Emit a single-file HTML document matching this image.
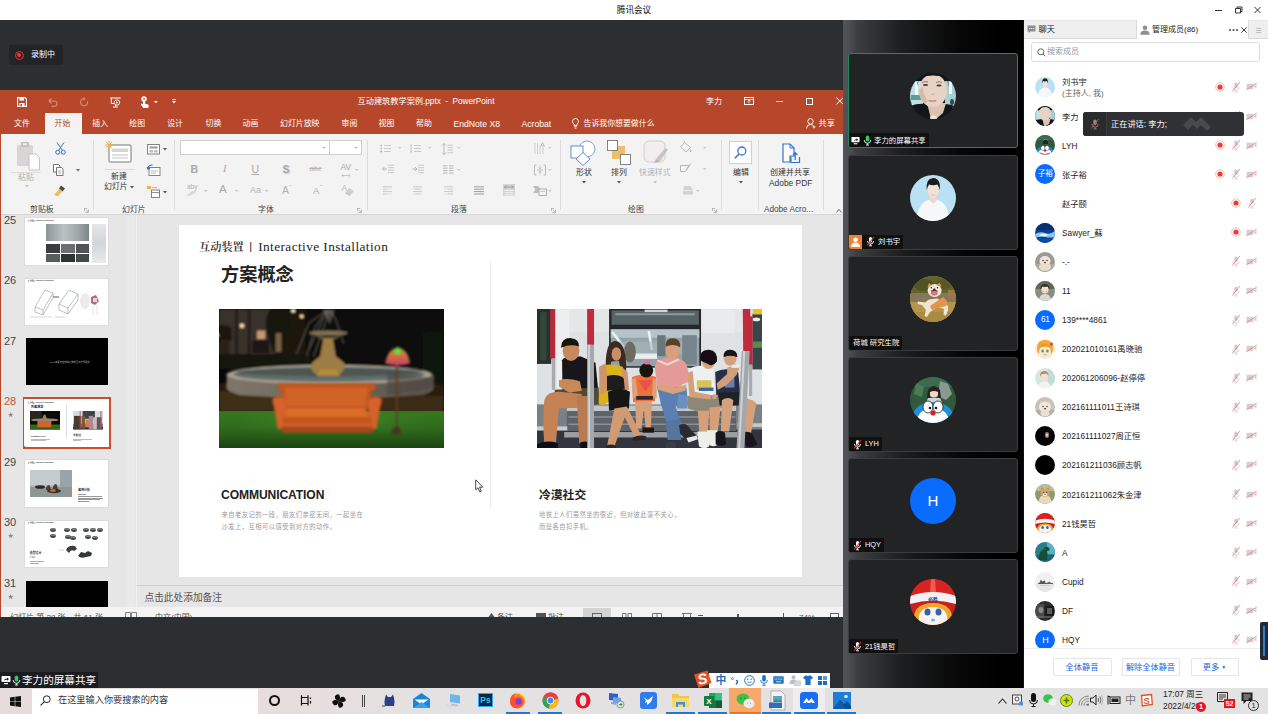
<!DOCTYPE html>
<html lang="zh-CN">
<head>
<meta charset="utf-8">
<title>腾讯会议</title>
<style>
*{box-sizing:border-box;margin:0;padding:0}
html,body{width:1268px;height:714px;overflow:hidden;background:#2c2f32}
body{position:relative;font-family:"Liberation Sans","Noto Sans CJK SC",sans-serif;font-size:9px;color:#222;line-height:1}
.a{position:absolute}
.t{position:absolute;white-space:nowrap;line-height:1}
svg{position:absolute;overflow:visible}
/* ===== top title bar ===== */
#titlebar{left:0;top:0;width:1268px;height:20px;background:#fff}
/* ===== ppt window ===== */
#ppt{left:0;top:90px;width:843px;height:527px;background:#e6e6e6;overflow:hidden}
#ppt .red{left:0;top:0;width:843px;height:44px;background:#b7472a}
#ppt .ribbon{left:0;top:44px;width:843px;height:81px;background:#f3f3f3;border-bottom:1px solid #d6d6d6}
#ppt .tab{color:#fff;font-size:9px;top:30px}
#ppt .gl{font-size:9px;color:#444;top:115px}
#ppt .sep{width:1px;top:50px;height:70px;background:#dcdcdc}
#thumbs{left:0;top:125px;width:136px;height:392px;background:#e6e6e6;overflow:hidden}
#thumbs .n{font-size:11px;color:#444;left:4px}
#thumbs .th{left:23.800px;width:85.200px;height:48.500px;background:#fff;border:1px solid #dcdcdc;overflow:hidden}
#main{left:136px;top:125px;width:707px;height:370px;background:#e6e6e6;border-left:1px solid #f2f2f2}
#slide{left:179px;top:134.500px;width:623px;height:352px;background:#fff;overflow:hidden}
#notes{left:136px;top:495px;width:707px;height:22px;background:#e6e6e6;border-top:1px solid #d0d0d0;border-left:1px solid #f2f2f2}
#status{left:0;top:517px;width:843px;height:10px;background:#f3f3f3;overflow:hidden}
/* ===== video column ===== */
#vcol{left:843px;top:20px;width:180px;height:668px;background:linear-gradient(90deg,#525458 0,#4e5054 5px,#3c3e40 14px,#1c1d1e 60px,#060606 120px,#000 160px)}
.tile{left:5px;width:170px;height:95px;background:#222324;border:1px solid #3b3c3d;border-radius:3px;overflow:hidden}
.tile .av{left:61px;top:19px;width:46px;height:46px;border-radius:50%;overflow:hidden}
.tile .lb{left:0;bottom:0;height:14px;background:#101010;color:#fff;font-size:7.4px;padding:0 3px 0 2px;display:flex;align-items:center;white-space:nowrap}
/* ===== right panel ===== */
#panel{left:1023px;top:20px;width:245px;height:668px;background:#fff;overflow:hidden}
.row{left:0;width:245px;height:29px}
.row .av{left:12.300px;top:4.800px;width:20px;height:20px;border-radius:50%;overflow:hidden}
.row .nm{left:39px;top:11px;font-size:8.300px;color:#222}
/* ===== taskbar ===== */
#taskbar{left:0;top:687.500px;width:1268px;height:26.500px;background:linear-gradient(90deg,#e6dadb 0,#e8dddd 290px,#e3e1e1 400px,#e3e3e3 100%)}
</style>
</head>
<body>
<!-- top title bar -->
<div id="titlebar" class="a">
  <div class="t" style="left:616.800px;top:5.500px;font-size:8.600px;color:#111">腾讯会议</div>
  <svg style="left:1213px;top:5px" width="50" height="10" viewBox="0 0 50 10"><path d="M2 5.5h7M22.5 3.5h5v4.500h-5zM24 3.500v-1.500h5v4.500h-1.500M41.500 2l6 6M47.500 2l-6 6" fill="none" stroke="#333" stroke-width="1"/></svg>
</div>

<!-- recording badge -->
<div class="a" style="left:9px;top:45px;width:54px;height:20px;background:#222427;border-radius:2px">
  <div class="a" style="left:5.500px;top:5.500px;width:9px;height:9px;border-radius:50%;border:1px solid #e33;"></div>
  <div class="a" style="left:7.700px;top:7.700px;width:4.600px;height:4.600px;border-radius:50%;background:#f03a3a"></div>
  <div class="t" style="left:22px;top:6px;font-size:8px;color:#fff">录制中</div>
</div>

<!-- PPT WINDOW -->
<div id="ppt" class="a">
  <div class="red a"></div>
  <div class="ribbon a"></div>
  <div class="a" style="left:0;top:44px;width:1px;height:483px;background:#b7472a;z-index:5"></div>
<svg style="left:16.500px;top:7px" width="10" height="10" viewBox="0 0 10 10"><path d="M.6.600h7.400l1.400 1.400v7.400h-8.800z" fill="none" stroke="#fff" stroke-width="1.100"/><rect x="2.500" y=".6" width="4.500" height="3" fill="#fff"/><rect x="2.500" y="6" width="5" height="3.400" fill="#fff"/><rect x="3.500" y="7" width="1.500" height="2.400" fill="#b7472a"/></svg>
<svg style="left:48px;top:7.500px" width="10" height="9" viewBox="0 0 10 9"><path d="M1 3h5q3 0 3 2.700t-3 2.700h-2.500M3.500.5L1 3l2.500 2.500" fill="none" stroke="#d48c75" stroke-width="1.100"/></svg>
<svg style="left:78.500px;top:7px" width="10" height="10" viewBox="0 0 10 10"><path d="M6.500 1.800a3.600 3.600 0 1 0 2 2.200M5 .3v3.200" fill="none" stroke="#d48c75" stroke-width="1.100"/></svg>
<svg style="left:109.500px;top:6.500px" width="11" height="11" viewBox="0 0 11 11"><path d="M.3 1h10.400M1.300 1v5.500h4M5.500 6.500v3M3 10h5" fill="none" stroke="#fff" stroke-width="1"/><circle cx="7" cy="5.500" r="2.700" fill="#b7472a" stroke="#fff" stroke-width=".9"/><path d="M6.200 4.200l2.200 1.300-2.200 1.300z" fill="#fff"/></svg>
<svg style="left:140px;top:6px" width="9" height="12" viewBox="0 0 9 12"><circle cx="4" cy="3" r="2.700" fill="#fff"/><circle cx="4" cy="3" r="1" fill="#b7472a"/><path d="M3 3.500h2v4l3 1q1 .5.800 1.500l-.5 2h-5l-2.500-3.500q0-1 1-1l1.200.8z" fill="#fff"/></svg>
<svg style="left:154px;top:10.500px" width="3.800" height="2.300" viewBox="0 0 5 3"><path d="M0 0h5l-2.500 3z" fill="#fff"/></svg>
<svg style="left:172.300px;top:9px" width="4" height="5" viewBox="0 0 5 6"><path d="M0 .5h5" stroke="#fff" stroke-width="1"/><path d="M0 2.500h5l-2.500 3z" fill="#fff"/></svg>
<div class="t" style="left:357.500px;top:8px;font-size:8px;color:#fff;word-spacing:0;white-space:pre;font-size:8.200px">互动建筑教学案例.pptx  -  PowerPoint</div>
<div class="t" style="left:706px;top:7.500px;font-size:8px;color:#fff">李力</div>
<svg style="left:744px;top:7px" width="10" height="8" viewBox="0 0 10 8"><rect x=".5" y=".5" width="9" height="7" fill="none" stroke="#fff" stroke-width="1"/><path d="M.5 2.500h9" stroke="#fff" stroke-width=".8"/><path d="M5 6.300v-3M3.700 4.500L5 3.200l1.300 1.300" stroke="#fff" stroke-width=".8" fill="none"/></svg>
<div class="a" style="left:776px;top:10.500px;width:7px;height:1px;background:#f1c4b8"></div>
<div class="a" style="left:806px;top:7.500px;width:7px;height:7px;border:1px solid #fff"></div>
<svg style="left:836px;top:7px" width="7" height="8" viewBox="0 0 7 8"><path d="M.3.500l7 7M7.300.500l-7 7" stroke="#fff" stroke-width="1"/></svg>
<div class="a" style="left:45px;top:23px;width:36.500px;height:21px;background:#f3f3f3"></div>
<div class="t tab" style="left:14px;color:#fff;font-size:7.900px">文件</div>
<div class="t tab" style="left:54.5px;color:#b7472a;font-size:7.900px">开始</div>
<div class="t tab" style="left:92.3px;color:#fff;font-size:7.900px">插入</div>
<div class="t tab" style="left:129.3px;color:#fff;font-size:7.900px">绘图</div>
<div class="t tab" style="left:167.2px;color:#fff;font-size:7.900px">设计</div>
<div class="t tab" style="left:205.5px;color:#fff;font-size:7.900px">切换</div>
<div class="t tab" style="left:242.5px;color:#fff;font-size:7.900px">动画</div>
<div class="t tab" style="left:280px;color:#fff;font-size:7.900px">幻灯片放映</div>
<div class="t tab" style="left:341.5px;color:#fff;font-size:7.900px">审阅</div>
<div class="t tab" style="left:378.5px;color:#fff;font-size:7.900px">视图</div>
<div class="t tab" style="left:416px;color:#fff;font-size:7.900px">帮助</div>
<div class="t tab" style="left:453.5px;color:#fff;font-size:8.650px;top:30.300px">EndNote X8</div>
<div class="t tab" style="left:521.5px;color:#fff;font-size:8.650px;top:30.300px">Acrobat</div>
<svg style="left:572px;top:27.500px" width="7" height="11" viewBox="0 0 7 11"><path d="M3.500.5a3 3 0 0 1 1.500 5.600v1.400h-3v-1.400a3 3 0 0 1 1.500-5.600zM2.300 8.800h2.400M2.600 10.200h1.800" fill="none" stroke="#fff" stroke-width=".9"/></svg>
<div class="t tab" style="left:583.500px;font-size:7.900px">告诉我你想要做什么</div>
<svg style="left:806px;top:28px" width="10" height="11" viewBox="0 0 10 11"><circle cx="4.500" cy="3.300" r="2.700" fill="none" stroke="#fff" stroke-width=".9"/><path d="M.5 10.500q0-4 4-4 2 0 3 1.200" fill="none" stroke="#fff" stroke-width=".9"/><path d="M6.500 9h3M8 7.500v3" stroke="#fff" stroke-width=".8"/></svg>
<div class="t tab" style="left:818.500px;font-size:8.200px">共享</div>
  <div class="a sep" style="left:93px"></div>
<div class="a sep" style="left:174px"></div>
<div class="a sep" style="left:367px"></div>
<div class="a sep" style="left:560px"></div>
<div class="a sep" style="left:721px"></div>
<div class="a sep" style="left:758px"></div>
<div class="a sep" style="left:823px"></div>
<div class="t" style="left:30px;top:116px;font-size:7.9px;color:#444">剪贴板</div>
<div class="t" style="left:122px;top:116px;font-size:7.9px;color:#444">幻灯片</div>
<div class="t" style="left:258px;top:116px;font-size:7.9px;color:#444">字体</div>
<div class="t" style="left:451px;top:116px;font-size:7.9px;color:#444">段落</div>
<div class="t" style="left:628px;top:116px;font-size:7.9px;color:#444">绘图</div>
<div class="t" style="left:764px;top:115.5px;font-size:8.2px;color:#444">Adobe Acro...</div>
<svg style="left:84px;top:118px" width="5" height="5" viewBox="0 0 5 5"><path d="M0 .5h3M.5 0v3M1.500 4.500h3v-3M2 2l2.300 2.300" fill="none" stroke="#aaa" stroke-width=".8"/></svg>
<svg style="left:357px;top:118px" width="5" height="5" viewBox="0 0 5 5"><path d="M0 .5h3M.5 0v3M1.500 4.500h3v-3M2 2l2.300 2.300" fill="none" stroke="#aaa" stroke-width=".8"/></svg>
<svg style="left:551px;top:118px" width="5" height="5" viewBox="0 0 5 5"><path d="M0 .5h3M.5 0v3M1.500 4.500h3v-3M2 2l2.300 2.300" fill="none" stroke="#aaa" stroke-width=".8"/></svg>
<svg style="left:712px;top:118px" width="5" height="5" viewBox="0 0 5 5"><path d="M0 .5h3M.5 0v3M1.500 4.500h3v-3M2 2l2.300 2.300" fill="none" stroke="#aaa" stroke-width=".8"/></svg>
<svg style="left:836px;top:119px" width="6" height="4" viewBox="0 0 6 4"><path d="M.3 3.500l2.700-3 2.700 3" fill="none" stroke="#555" stroke-width=".9"/></svg>
<svg style="left:16px;top:52px" width="24" height="29" viewBox="0 0 24 29"><rect x="1" y="3" width="16" height="21" rx="1" fill="#d9d5d5"/><rect x="5" y="0" width="8" height="5" rx="1" fill="#c3bfbf"/><rect x="7" y="1.200" width="4" height="2" fill="#ececec"/><path d="M13 12h7l3.500 3.500v12.500h-10.500z" fill="#fdfdfd" stroke="#bdbdbd" stroke-width=".9"/></svg>
<div class="a" style="left:11px;top:82px;width:30px;height:1px;background:#ddd"></div>
<div class="t" style="left:18px;top:83.5px;font-size:7.9px;color:#b0b0b0">粘贴</div>
<svg style="left:24.5px;top:94.5px" width="4" height="2.5" viewBox="0 0 4 2.5"><path d="M0 0h4l-2 2.500z" fill="#c4c4c4"/></svg>
<svg style="left:55px;top:52px" width="11" height="13" viewBox="0 0 11 13"><path d="M2 .5l5.500 8M9 .5l-5.500 8" stroke="#3b6fb5" stroke-width="1" fill="none"/><circle cx="2.700" cy="10.200" r="2" fill="none" stroke="#3b6fb5" stroke-width="1"/><circle cx="8.300" cy="10.200" r="2" fill="none" stroke="#3b6fb5" stroke-width="1"/></svg>
<svg style="left:53px;top:74px" width="11" height="12" viewBox="0 0 11 12"><path d="M.5.500h5l1.500 1.500v6h-6.500z" fill="#fff" stroke="#666" stroke-width=".9"/><path d="M3.500 3.500h5l1.500 1.500v6.500h-6.500z" fill="#fff" stroke="#666" stroke-width=".9"/><path d="M5 7h3M5 9h3" stroke="#888" stroke-width=".7"/></svg>
<svg style="left:75.5px;top:78.5px" width="4" height="2.5" viewBox="0 0 4 2.5"><path d="M0 0h4l-2 2.500z" fill="#666"/></svg>
<svg style="left:54px;top:95px" width="12" height="11" viewBox="0 0 12 11"><path d="M7 .5l4 3-2.500 3-3.500-3z" fill="#4a4a4a"/><path d="M5 3.500l3.500 3-4 4-4-.8z" fill="#f0c060"/><path d="M.5 9.700l4 .8" stroke="#d9a441" stroke-width=".8"/></svg>
<svg style="left:105px;top:50px" width="27" height="26" viewBox="0 0 27 26"><rect x="4" y="5" width="22" height="17" rx="1" fill="#fff" stroke="#777" stroke-width="1"/><rect x="7" y="8.500" width="16" height="3.500" fill="#d5d5d5"/><path d="M7 15h16M7 18h16" stroke="#c4c4c4" stroke-width="1"/><path d="M4 1v8M0 5h8M1.200 2.200l5.600 5.600M6.800 2.200l-5.600 5.600" stroke="#f0b23a" stroke-width="1"/></svg>
<div class="a" style="left:105px;top:79px;width:30px;height:1px;background:#ddd"></div>
<div class="t" style="left:111px;top:83px;font-size:7.9px;color:#333">新建</div>
<div class="t" style="left:104px;top:93px;font-size:7.9px;color:#333">幻灯片</div>
<svg style="left:130px;top:95.5px" width="4" height="2.5" viewBox="0 0 4 2.5"><path d="M0 0h4l-2 2.500z" fill="#555"/></svg>
<svg style="left:147px;top:54px" width="14" height="11" viewBox="0 0 14 11"><rect x=".5" y=".5" width="12" height="9.500" fill="#fff" stroke="#777" stroke-width=".9"/><rect x="2.500" y="2.500" width="8" height="2" fill="#999"/><rect x="2.500" y="6" width="3.500" height="2.500" fill="#bbb"/><rect x="7" y="6" width="3.500" height="2.500" fill="#bbb"/></svg>
<svg style="left:162.5px;top:58px" width="4" height="2.5" viewBox="0 0 4 2.5"><path d="M0 0h4l-2 2.500z" fill="#555"/></svg>
<svg style="left:147px;top:74px" width="14" height="12" viewBox="0 0 14 12"><rect x="2" y="3.500" width="11" height="8" fill="#fff" stroke="#777" stroke-width=".9"/><path d="M4 7h7M4 9h5" stroke="#aaa" stroke-width=".8"/><path d="M1 5q0-4 4.500-4M.2 3l.8 2.200 2-1" fill="none" stroke="#2b6cc4" stroke-width="1.100"/></svg>
<svg style="left:147px;top:96px" width="14" height="12" viewBox="0 0 14 12"><rect x="0" y="0" width="4" height="3" fill="#f0b23a"/><path d="M5 1.500h5" stroke="#f0b23a" stroke-width="1"/><rect x="4.500" y="4" width="8" height="7.500" fill="#fff" stroke="#777" stroke-width=".9"/><path d="M4.500 6.500h8" stroke="#777" stroke-width=".8"/></svg>
<svg style="left:162.5px;top:100.5px" width="4" height="2.5" viewBox="0 0 4 2.5"><path d="M0 0h4l-2 2.500z" fill="#555"/></svg>
<div class="a" style="left:180px;top:50px;width:150px;height:15px;background:#fff;border:1px solid #cfcfcf"></div>
<div class="a" style="left:329px;top:50px;width:33px;height:15px;background:#fff;border:1px solid #cfcfcf"></div>
<svg style="left:322px;top:57px" width="3.5" height="2" viewBox="0 0 3.5 2"><path d="M0 0h3.500l-1.750 2z" fill="#bbb"/></svg>
<svg style="left:354px;top:57px" width="3.5" height="2" viewBox="0 0 3.5 2"><path d="M0 0h3.500l-1.750 2z" fill="#bbb"/></svg>
<div class="t" style="left:190.5px;top:73.5px;font-size:10.5px;color:#a9a9a9;font-weight:bold;font-family:'Liberation Sans',sans-serif">B</div>
<div class="t" style="left:223px;top:73.5px;font-size:10.5px;color:#a9a9a9;font-style:italic;font-family:'Liberation Serif',serif">I</div>
<div class="t" style="left:251.5px;top:73.5px;font-size:10.5px;color:#a9a9a9;text-decoration:underline;font-family:'Liberation Sans',sans-serif">U</div>
<div class="t" style="left:282.5px;top:73.5px;font-size:10.5px;color:#a9a9a9;font-weight:bold;text-shadow:1px 1px 1px #ccc;font-family:'Liberation Sans',sans-serif">S</div>
<div class="t" style="left:309.5px;top:75px;font-size:7.5px;color:#b5b5b5;text-decoration:line-through;font-family:'Liberation Sans',sans-serif">abc</div>
<div class="t" style="left:340.5px;top:73px;font-size:8.5px;color:#a9a9a9;font-family:'Liberation Sans',sans-serif">AV</div>
<svg style="left:341px;top:83.5px" width="10" height="3" viewBox="0 0 10 3"><path d="M1 1.500h8M2.200.3L1 1.500l1.200 1.200M7.800.3L9 1.500l-1.200 1.200" fill="none" stroke="#b5b5b5" stroke-width=".7"/></svg>
<svg style="left:355px;top:78.5px" width="3.5" height="2" viewBox="0 0 3.5 2"><path d="M0 0h3.500l-1.750 2z" fill="#c4c4c4"/></svg>
<div class="t" style="left:187px;top:94px;font-size:6.5px;color:#b0b0b0;font-family:'Liberation Sans',sans-serif">aby</div>
<svg style="left:186px;top:100.5px" width="12" height="5" viewBox="0 0 12 5"><path d="M6 0l5 .5-6 4-5 .5z" fill="#d9d9d9"/></svg>
<svg style="left:203.5px;top:100px" width="3.5" height="2" viewBox="0 0 3.5 2"><path d="M0 0h3.500l-1.750 2z" fill="#c4c4c4"/></svg>
<div class="t" style="left:219px;top:94px;font-size:11.5px;color:#a9a9a9;font-family:'Liberation Sans',sans-serif">A</div>
<svg style="left:234.5px;top:100px" width="3.5" height="2" viewBox="0 0 3.5 2"><path d="M0 0h3.500l-1.750 2z" fill="#c4c4c4"/></svg>
<div class="t" style="left:250px;top:95.5px;font-size:9px;color:#b5b5b5;font-family:'Liberation Sans',sans-serif">Aa</div>
<svg style="left:264.5px;top:100px" width="3.5" height="2" viewBox="0 0 3.5 2"><path d="M0 0h3.500l-1.750 2z" fill="#c4c4c4"/></svg>
<div class="t" style="left:282px;top:95px;font-size:10.5px;color:#b0b0b0;font-family:'Liberation Sans',sans-serif">A</div>
<div class="t" style="left:289.5px;top:93.5px;font-size:6px;color:#b0b0b0;font-family:'Liberation Sans',sans-serif">ˆ</div>
<div class="t" style="left:313px;top:96px;font-size:9.5px;color:#b0b0b0;font-family:'Liberation Sans',sans-serif">A</div>
<div class="t" style="left:320px;top:93.5px;font-size:6px;color:#b0b0b0;font-family:'Liberation Sans',sans-serif">ˇ</div>
<div class="t" style="left:341.5px;top:93.5px;font-size:8.5px;color:#b5b5b5;font-family:'Liberation Sans',sans-serif">A</div>
<svg style="left:345px;top:98px" width="10" height="8" viewBox="0 0 10 8"><path d="M4 0l5 3-4 4.500-4.500-2.500z" fill="#cfcfcf"/><path d="M.5 5l4.500 2.500" stroke="#bdbdbd" stroke-width="1"/></svg>
<svg style="left:380px;top:53.5px" width="11" height="9" viewBox="0 0 11 9"><path d="M4 1.5h7" stroke="#c9c9c9" stroke-width="1"/><path d="M4 4.5h7" stroke="#c9c9c9" stroke-width="1"/><path d="M4 7.5h7" stroke="#c9c9c9" stroke-width="1"/><circle cx="1.200" cy="1.5" r=".9" fill="#b5b5b5"/><circle cx="1.200" cy="4.5" r=".9" fill="#b5b5b5"/><circle cx="1.200" cy="7.5" r=".9" fill="#b5b5b5"/></svg>
<svg style="left:397.5px;top:57px" width="3.5" height="2" viewBox="0 0 3.5 2"><path d="M0 0h3.500l-1.750 2z" fill="#c9c9c9"/></svg>
<svg style="left:410px;top:53.5px" width="11" height="9" viewBox="0 0 11 9"><path d="M4 1.5h7" stroke="#c9c9c9" stroke-width="1"/><path d="M4 4.5h7" stroke="#c9c9c9" stroke-width="1"/><path d="M4 7.5h7" stroke="#c9c9c9" stroke-width="1"/><rect x="0.500" y="0.5" width="1.200" height="2" fill="#b5b5b5"/><rect x="0.500" y="3.5" width="1.200" height="2" fill="#b5b5b5"/><rect x="0.500" y="6.5" width="1.200" height="2" fill="#b5b5b5"/></svg>
<svg style="left:428px;top:57px" width="3.5" height="2" viewBox="0 0 3.5 2"><path d="M0 0h3.500l-1.750 2z" fill="#c9c9c9"/></svg>
<svg style="left:442px;top:52.5px" width="11" height="12" viewBox="0 0 11 12"><path d="M2 .5v11M.3 2.500L2 .5l1.700 2M.3 9.500L2 11.500l1.700-2" fill="none" stroke="#b5b5b5" stroke-width=".9"/><path d="M5.5 2.2h5.5" stroke="#c9c9c9" stroke-width="1"/><path d="M5.5 4.7h5.5" stroke="#c9c9c9" stroke-width="1"/><path d="M5.5 7.2h5.5" stroke="#c9c9c9" stroke-width="1"/><path d="M5.5 9.7h5.5" stroke="#c9c9c9" stroke-width="1"/></svg>
<svg style="left:457px;top:57px" width="3.5" height="2" viewBox="0 0 3.5 2"><path d="M0 0h3.500l-1.750 2z" fill="#c9c9c9"/></svg>
<svg style="left:382px;top:74px" width="12" height="10" viewBox="0 0 12 10"><path d="M6 1.2h6" stroke="#c9c9c9" stroke-width="1"/><path d="M6 3.7h6" stroke="#c9c9c9" stroke-width="1"/><path d="M6 6.2h6" stroke="#c9c9c9" stroke-width="1"/><path d="M6 8.7h6" stroke="#c9c9c9" stroke-width="1"/><path d="M5 5h-4.500M2.500 3L.5 5l2 2" fill="none" stroke="#b5b5b5" stroke-width="1"/></svg>
<svg style="left:412px;top:74px" width="12" height="10" viewBox="0 0 12 10"><path d="M6 1.2h6" stroke="#c9c9c9" stroke-width="1"/><path d="M6 3.7h6" stroke="#c9c9c9" stroke-width="1"/><path d="M6 6.2h6" stroke="#c9c9c9" stroke-width="1"/><path d="M6 8.7h6" stroke="#c9c9c9" stroke-width="1"/><path d="M.5 5h4.500M3 3l2 2-2 2" fill="none" stroke="#b5b5b5" stroke-width="1"/></svg>
<svg style="left:443px;top:75px" width="11" height="9" viewBox="0 0 11 9"><path d="M0 0.8h4.5" stroke="#b5b5b5" stroke-width="1"/><path d="M0 3.2h4.5" stroke="#b5b5b5" stroke-width="1"/><path d="M0 5.6h4.5" stroke="#b5b5b5" stroke-width="1"/><path d="M0 7.999999999999999h4.5" stroke="#b5b5b5" stroke-width="1"/><path d="M6 0.8h4.5" stroke="#b5b5b5" stroke-width="1"/><path d="M6 3.2h4.5" stroke="#b5b5b5" stroke-width="1"/><path d="M6 5.6h4.5" stroke="#b5b5b5" stroke-width="1"/><path d="M6 7.999999999999999h4.5" stroke="#b5b5b5" stroke-width="1"/></svg>
<svg style="left:457px;top:78.5px" width="3.5" height="2" viewBox="0 0 3.5 2"><path d="M0 0h3.500l-1.750 2z" fill="#c9c9c9"/></svg>
<svg style="left:383px;top:96px" width="10" height="9" viewBox="0 0 10 9"><path d="M0 0.8h9" stroke="#c9c9c9" stroke-width="1"/><path d="M0 3.2h9" stroke="#c9c9c9" stroke-width="1"/><path d="M0 5.6h9" stroke="#c9c9c9" stroke-width="1"/><path d="M0 7.999999999999999h9" stroke="#c9c9c9" stroke-width="1"/><path d="M4.5 3.2h5" stroke="#f3f3f3" stroke-width="1.2"/><path d="M4.5 8.0h5" stroke="#f3f3f3" stroke-width="1.2"/></svg>
<svg style="left:413px;top:96px" width="10" height="9" viewBox="0 0 10 9"><path d="M0 0.8h9" stroke="#c9c9c9" stroke-width="1"/><path d="M0 3.2h9" stroke="#c9c9c9" stroke-width="1"/><path d="M0 5.6h9" stroke="#c9c9c9" stroke-width="1"/><path d="M0 7.999999999999999h9" stroke="#c9c9c9" stroke-width="1"/><path d="M0 3.2h2.2" stroke="#f3f3f3" stroke-width="1.2"/><path d="M0 8.0h2.2" stroke="#f3f3f3" stroke-width="1.2"/><path d="M6.8 3.2h2.2" stroke="#f3f3f3" stroke-width="1.2"/><path d="M6.8 8.0h2.2" stroke="#f3f3f3" stroke-width="1.2"/></svg>
<svg style="left:444px;top:96px" width="10" height="9" viewBox="0 0 10 9"><path d="M0 0.8h9" stroke="#c9c9c9" stroke-width="1"/><path d="M0 3.2h9" stroke="#c9c9c9" stroke-width="1"/><path d="M0 5.6h9" stroke="#c9c9c9" stroke-width="1"/><path d="M0 7.999999999999999h9" stroke="#c9c9c9" stroke-width="1"/><path d="M0 3.2h4" stroke="#f3f3f3" stroke-width="1.2"/><path d="M0 8.0h4" stroke="#f3f3f3" stroke-width="1.2"/></svg>
<svg style="left:474px;top:96px" width="10" height="9" viewBox="0 0 10 9"><path d="M0 0.8h10" stroke="#9a9a9a" stroke-width="1"/><path d="M0 3.2h10" stroke="#9a9a9a" stroke-width="1"/><path d="M0 5.6h10" stroke="#9a9a9a" stroke-width="1"/><path d="M0 7.999999999999999h10" stroke="#9a9a9a" stroke-width="1"/></svg>
<svg style="left:503px;top:94px" width="12" height="12" viewBox="0 0 12 12"><rect x="0" y="0" width="12" height="12" fill="#d4d4d4"/><path d="M1.500 3h9M3 1.500L1.500 3 3 4.500M9 1.500l1.500 1.500L9 4.500" fill="none" stroke="#8a8a8a" stroke-width=".8"/><path d="M1.5 6.5h9" stroke="#f6f6f6" stroke-width="0.9"/><path d="M1.5 8.7h9" stroke="#f6f6f6" stroke-width="0.9"/><path d="M1.5 10.9h9" stroke="#f6f6f6" stroke-width="0.9"/></svg>
<svg style="left:534px;top:52px" width="12" height="13" viewBox="0 0 12 13"><path d="M1 1v11M3.500 1v11M6 4v8M9 4v8" stroke="#c9c9c9" stroke-width=".9"/><path d="M6.500 4.500l2-4 2 4M7.200 3.200h2.600" fill="none" stroke="#b5b5b5" stroke-width=".9"/></svg>
<svg style="left:548px;top:57px" width="3.5" height="2" viewBox="0 0 3.5 2"><path d="M0 0h3.500l-1.750 2z" fill="#c9c9c9"/></svg>
<svg style="left:534px;top:74px" width="12" height="12" viewBox="0 0 12 12"><path d="M2.500 1h-2v10h2M9.500 1h2v10h-2" fill="none" stroke="#b5b5b5" stroke-width=".9"/><path d="M3 6h6" stroke="#b5b5b5" stroke-width=".9"/><path d="M6 1.500v3M4.800 3.500L6 4.800l1.200-1.300M6 10.500v-3M4.800 8.500L6 7.200l1.200 1.300" fill="none" stroke="#b5b5b5" stroke-width=".8"/></svg>
<svg style="left:548px;top:78.5px" width="3.5" height="2" viewBox="0 0 3.5 2"><path d="M0 0h3.500l-1.750 2z" fill="#c9c9c9"/></svg>
<svg style="left:533px;top:95px" width="14" height="11" viewBox="0 0 14 11"><path d="M0 1h5l3 3.500-3 3.500h-5l2.500-3.500z" fill="#bdbdbd"/><rect x="6" y="4" width="7.500" height="6.500" fill="#f3f3f3" stroke="#a9a9a9" stroke-width=".9"/><path d="M7.500 6.500h4.500" stroke="#bbb" stroke-width=".8"/></svg>
<svg style="left:548px;top:100px" width="3.5" height="2" viewBox="0 0 3.5 2"><path d="M0 0h3.500l-1.750 2z" fill="#c9c9c9"/></svg>
<svg style="left:570px;top:50px" width="27" height="26" viewBox="0 0 27 26"><circle cx="17" cy="9" r="8" fill="#fff" stroke="#7fa6d6" stroke-width="1"/><rect x="1" y="6" width="12" height="12" fill="#fff" stroke="#5b8fd0" stroke-width="1"/><path d="M13 12.500l7 6.500-7 6.500-7-6.500z" fill="#fff" stroke="#5b8fd0" stroke-width="1"/></svg>
<div class="t" style="left:576px;top:79px;font-size:7.9px;color:#333">形状</div>
<svg style="left:582px;top:90.5px" width="4" height="2.5" viewBox="0 0 4 2.5"><path d="M0 0h4l-2 2.500z" fill="#555"/></svg>
<svg style="left:607px;top:50px" width="25" height="26" viewBox="0 0 25 26"><rect x="5" y="6" width="13" height="13" fill="#eac06c"/><rect x=".5" y=".5" width="10" height="10" fill="#fff" stroke="#777" stroke-width=".9"/><rect x="13.500" y="14.500" width="10" height="10" fill="#fff" stroke="#777" stroke-width=".9"/></svg>
<div class="t" style="left:611px;top:79px;font-size:7.9px;color:#333">排列</div>
<svg style="left:617px;top:90.5px" width="4" height="2.5" viewBox="0 0 4 2.5"><path d="M0 0h4l-2 2.500z" fill="#555"/></svg>
<svg style="left:643px;top:50px" width="26" height="26" viewBox="0 0 26 26"><rect x="1" y="1" width="21" height="21" rx="5" fill="#f0eeee" stroke="#cfcfcf" stroke-width="1"/><path d="M13 19l9-11 3 1.500-8 12z" fill="#c9c5c5"/><path d="M11 23l2-4 4 2.500z" fill="#b8b4b4"/></svg>
<div class="t" style="left:639px;top:79px;font-size:7.9px;color:#b5b5b5">快速样式</div>
<svg style="left:652.5px;top:90.5px" width="4" height="2.5" viewBox="0 0 4 2.5"><path d="M0 0h4l-2 2.500z" fill="#c4c4c4"/></svg>
<svg style="left:680px;top:51px" width="12" height="12" viewBox="0 0 12 12"><path d="M4.500 1.500l6 5-4.500 4.500-5.500-5z" fill="none" stroke="#b0b0b0" stroke-width=".9"/><path d="M4.500 1.500v-1.500M10.500 8.500q1 1.500 0 2.500-1-1 0-2.500z" stroke="#b0b0b0" stroke-width=".8" fill="none"/></svg>
<svg style="left:703px;top:56.5px" width="3.5" height="2" viewBox="0 0 3.5 2"><path d="M0 0h3.500l-1.750 2z" fill="#c9c9c9"/></svg>
<svg style="left:680px;top:73px" width="12" height="11" viewBox="0 0 12 11"><path d="M.5 2.500h8.500l-3.500 6h-5z" fill="none" stroke="#b0b0b0" stroke-width=".9"/><path d="M11 .5l-5 6.500" stroke="#b0b0b0" stroke-width="1"/></svg>
<svg style="left:703px;top:78px" width="3.5" height="2" viewBox="0 0 3.5 2"><path d="M0 0h3.500l-1.750 2z" fill="#c9c9c9"/></svg>
<svg style="left:682px;top:95px" width="12" height="11" viewBox="0 0 12 11"><path d="M2.500 1h6l2.500 4v4.500h-10v-4.500z" fill="#d3d3d3"/><path d="M1 5.500h10" stroke="#f3f3f3" stroke-width=".8"/></svg>
<svg style="left:696px;top:100px" width="3.5" height="2" viewBox="0 0 3.5 2"><path d="M0 0h3.500l-1.750 2z" fill="#c9c9c9"/></svg>
<div class="a" style="left:729px;top:51px;width:23px;height:23px;background:#fff;border:1px solid #d0d0d0"></div>
<svg style="left:734px;top:56px" width="13" height="13" viewBox="0 0 13 13"><circle cx="7.800" cy="5" r="4" fill="none" stroke="#3d78c4" stroke-width="1.300"/><path d="M5 8L.8 12.200" stroke="#3d78c4" stroke-width="1.600"/></svg>
<div class="t" style="left:733px;top:79px;font-size:7.9px;color:#333">编辑</div>
<svg style="left:739px;top:90.5px" width="4" height="2.5" viewBox="0 0 4 2.5"><path d="M0 0h4l-2 2.500z" fill="#555"/></svg>
<svg style="left:782px;top:53px" width="19" height="21" viewBox="0 0 19 21"><path d="M1 1h7l4 4v8h-4v6h-7z" fill="#fff" stroke="#2f74d0" stroke-width="1.200"/><path d="M8 1v4h4" fill="none" stroke="#2f74d0" stroke-width="1"/><path d="M9 14v5.500h8.500v-5.500M13.200 17v-7M11 12l2.200-2.300 2.200 2.300" fill="none" stroke="#2f74d0" stroke-width="1.200"/></svg>
<div class="t" style="left:770px;top:79px;font-size:8px;color:#333">创建并共享</div>
<div class="t" style="left:769px;top:89px;font-size:8.4px;color:#333">Adobe PDF</div>
  <div id="thumbs" class="a">
  <div class="t n" style="top:-0.5px;color:#444">25</div>
<div class="t n" style="top:60.0px;color:#444">26</div>
<div class="t n" style="top:120.80000000000001px;color:#444">27</div>
<div class="t n" style="top:181.10000000000002px;color:#c8502c">28</div>
<svg style="left:8px;top:197.10000000000002px" width="5.500" height="5.500" viewBox="0 0 7 7"><path d="M3.500 0l.9 2.500h2.600l-2.100 1.600.8 2.600-2.200-1.600-2.200 1.600.8-2.600-2.100-1.600h2.600z" fill="#888"/></svg>
<div class="t n" style="top:241.7px;color:#444">29</div>
<div class="t n" style="top:302.29999999999995px;color:#444">30</div>
<svg style="left:8px;top:318.29999999999995px" width="5.500" height="5.500" viewBox="0 0 7 7"><path d="M3.500 0l.9 2.500h2.600l-2.100 1.600.8 2.600-2.200-1.600-2.200 1.600.8-2.600-2.100-1.600h2.600z" fill="#888"/></svg>
<div class="t n" style="top:363.1px;color:#444">31</div>
<svg style="left:8px;top:379.1px" width="5.500" height="5.500" viewBox="0 0 7 7"><path d="M3.500 0l.9 2.500h2.600l-2.100 1.600.8 2.600-2.200-1.600-2.200 1.600.8-2.600-2.100-1.600h2.600z" fill="#888"/></svg>
<div class="th a" style="top:2px;"><div class="t" style="left:3px;top:1.500px;font-size:1.700px;color:#333;font-weight:bold">互动装置 | Interactive Installation</div><div class="a" style="left:21.500px;top:5.500px;width:43px;height:17.500px;background:linear-gradient(90deg,#8b9496,#b9c1c3 40%,#a3abad 70%,#7b8486)"></div><div class="a" style="left:21.5px;top:26px;width:13.500px;height:8.6px;background:#3a3d3f"></div><div class="a" style="left:36.3px;top:26px;width:13.500px;height:8.6px;background:#6b6f70"></div><div class="a" style="left:51.1px;top:26px;width:13.500px;height:8.6px;background:#505455"></div><div class="a" style="left:21.5px;top:35.8px;width:13.500px;height:8.6px;background:#585c5d"></div><div class="a" style="left:36.3px;top:35.8px;width:13.500px;height:8.6px;background:#2f3233"></div><div class="a" style="left:51.1px;top:35.8px;width:13.500px;height:8.6px;background:#45494a"></div><div class="a" style="left:67px;top:5.500px;width:14px;height:39px;background:linear-gradient(180deg,#e4e6e7,#d3d6d8 50%,#e8eaeb)"></div></div>
<div class="th a" style="top:62.5px;"><div class="t" style="left:3px;top:1.500px;font-size:1.700px;color:#333;font-weight:bold">互动装置 | Interactive Installation</div><svg style="left:0;top:0" width="83" height="47" viewBox="0 0 83 47"><g fill="none" stroke="#8d99a3" stroke-width=".6"><path d="M10 28l10-17 8 3-10 17zM10 28v5l8 3v-5M28 14v5l-10 17"/><path d="M34 25l10-14 9 4-10 14zM34 25v6l9 4v-6M53 15v6l-10 14"/><path d="M5 38h22M30 38h10" stroke="#e0b0b0"/></g><path d="M28 18h6" stroke="#777" stroke-width="1.200"/><ellipse cx="60" cy="22" rx="5" ry="8" fill="#ececec"/><path d="M66 18l5-2 3 6-4 4-4-2z" fill="#b56a78"/><rect x="68" y="19" width="4" height="4" fill="#d9d9e2"/><path d="M68 26v10M72 26v10" stroke="#e6b8b8" stroke-width=".5"/></svg></div>
<div class="th a" style="top:123.30000000000001px;background:#000;border-color:#000;left:26px;width:82px;height:46.500px"><div class="t" style="left:23px;top:22px;font-size:2.200px;color:#bdbdbd;letter-spacing:.1px">2016年夏天在布鲁克林的互动装置展览</div></div>
<div class="a" style="left:22.500px;top:182px;width:88.500px;height:52px;border:2px solid #c8502c;background:#fff"></div>
<div class="th a" style="top:183.60000000000002px;border-color:#fff;top:184px;height:47px"><div class="t" style="left:3px;top:1.500px;font-size:1.700px;color:#333;font-weight:bold">互动装置 | Interactive Installation</div><div class="t" style="left:6px;top:6px;font-size:3.200px;font-weight:bold;color:#222">方案概念</div><svg style="left:5.500px;top:11.300px" width="30" height="18.500" viewBox="25 25 1077 665" preserveAspectRatio="none"><rect x="25" y="25" width="1077" height="665" fill="#0d0b08"/><rect x="25" y="25" width="420" height="270" fill="#2b251d"/><ellipse cx="552" cy="345" rx="492" ry="60" fill="#8d877b"/><path d="M520 160h55l60 140h-170z" fill="#a78648"/><rect x="25" y="512" width="1077" height="178" fill="#2f6a1c"/><path d="M290 385h500v225h-500z" fill="#d4622a"/></svg><svg style="left:48px;top:11.300px" width="30" height="18.500" viewBox="25 25 1077 665" preserveAspectRatio="none"><rect x="25" y="25" width="1077" height="665" fill="#d9dcde"/><rect x="370" y="25" width="440" height="280" fill="#3a444a"/><rect x="25" y="480" width="1077" height="125" fill="#7a8085"/><rect x="25" y="600" width="1077" height="90" fill="#32363e"/><path d="M60 200h250v480h-250z" fill="#4a3a30"/><path d="M330 200h130v450h-130z" fill="#7a5a30"/><path d="M480 330h115v280h-115z" fill="#e0764a"/><path d="M590 200h160v470h-160z" fill="#a98a9a"/><path d="M750 250h150v430h-150z" fill="#cdbfae"/><path d="M880 250h170v430h-170z" fill="#5a5560"/><rect x="265" y="25" width="33" height="665" fill="#b0586a"/><rect x="1010" y="25" width="36" height="665" fill="#b0586a"/></svg><div class="a" style="left:41.500px;top:5px;width:.5px;height:33px;background:#ddd"></div><div class="t" style="left:6px;top:35.500px;font-size:1.700px;font-weight:bold;color:#222">COMMUNICATION</div><div class="a" style="left:6px;top:38.500px;width:19px;height:.5px;background:#bbb"></div><div class="a" style="left:6px;top:40px;width:15px;height:.5px;background:#bbb"></div><div class="t" style="left:48.500px;top:35.300px;font-size:1.900px;font-weight:bold;color:#222">冷漠社交</div><div class="a" style="left:48.500px;top:38.500px;width:19px;height:.5px;background:#bbb"></div><div class="a" style="left:48.500px;top:40px;width:8px;height:.5px;background:#bbb"></div></div>
<div class="th a" style="top:244.2px;"><div class="t" style="left:3px;top:1.500px;font-size:1.700px;color:#333;font-weight:bold">互动装置 | Interactive Installation</div><svg style="left:5px;top:9.500px" width="42" height="27" viewBox="0 0 42 27"><rect width="42" height="27" fill="#aeb6ba"/><rect x="0" y="0" width="42" height="15" fill="#c3cbcf"/><rect x="30" y="0" width="12" height="17" fill="#9aa3a8"/><rect y="17" width="42" height="10" fill="#8f9796"/><ellipse cx="10" cy="17" rx="5" ry="1.800" fill="#2a2a2a"/><path d="M16 18q2-5 4-2l1 4h-5zM23 17q2-5 4-2l1 5h-5z" fill="#4a3f38"/><ellipse cx="24" cy="21" rx="7" ry="2.200" fill="#3a2f2a"/><ellipse cx="23" cy="20.500" rx="3" ry="1.200" fill="#c9752a"/></svg><div class="t" style="left:53.500px;top:28.500px;font-size:2.900px;font-weight:bold;color:#222">案例分析</div><div class="a" style="left:53.500px;top:34.0px;width:8px;height:.6px;background:#999"></div><div class="a" style="left:53.500px;top:35.7px;width:24px;height:.6px;background:#999"></div><div class="a" style="left:53.500px;top:37.4px;width:25px;height:.6px;background:#999"></div><div class="a" style="left:53.500px;top:39.1px;width:22px;height:.6px;background:#999"></div><div class="a" style="left:53.500px;top:40.8px;width:11px;height:.6px;background:#999"></div></div>
<div class="th a" style="top:304.79999999999995px;"><div class="t" style="left:3px;top:1.500px;font-size:1.700px;color:#333;font-weight:bold">互动装置 | Interactive Installation</div><svg style="left:0;top:0" width="83" height="47" viewBox="0 0 83 47"><ellipse cx="28" cy="9" rx="2.900" ry="1.900" fill="#3f4346"/><ellipse cx="28" cy="8.2" rx="2.300" ry=".9" fill="#7a7f82"/><ellipse cx="42" cy="9" rx="2.900" ry="1.900" fill="#3f4346"/><ellipse cx="42" cy="8.2" rx="2.300" ry=".9" fill="#7a7f82"/><ellipse cx="49" cy="9" rx="2.900" ry="1.900" fill="#3f4346"/><ellipse cx="49" cy="8.2" rx="2.300" ry=".9" fill="#7a7f82"/><ellipse cx="61" cy="9" rx="2.900" ry="1.900" fill="#3f4346"/><ellipse cx="61" cy="8.2" rx="2.300" ry=".9" fill="#7a7f82"/><ellipse cx="68" cy="9" rx="2.900" ry="1.900" fill="#3f4346"/><ellipse cx="68" cy="8.2" rx="2.300" ry=".9" fill="#7a7f82"/><ellipse cx="75" cy="9" rx="2.900" ry="1.900" fill="#3f4346"/><ellipse cx="75" cy="8.2" rx="2.300" ry=".9" fill="#7a7f82"/><ellipse cx="28" cy="15" rx="2.900" ry="1.900" fill="#3f4346"/><ellipse cx="28" cy="14.2" rx="2.300" ry=".9" fill="#7a7f82"/><ellipse cx="43" cy="16" rx="2.900" ry="1.900" fill="#3f4346"/><ellipse cx="43" cy="15.2" rx="2.300" ry=".9" fill="#7a7f82"/><ellipse cx="48" cy="17" rx="2.900" ry="1.900" fill="#3f4346"/><ellipse cx="48" cy="16.2" rx="2.300" ry=".9" fill="#7a7f82"/><ellipse cx="63" cy="16" rx="2.900" ry="1.900" fill="#3f4346"/><ellipse cx="63" cy="15.2" rx="2.300" ry=".9" fill="#7a7f82"/><ellipse cx="70" cy="17" rx="2.900" ry="1.900" fill="#3f4346"/><ellipse cx="70" cy="16.2" rx="2.300" ry=".9" fill="#7a7f82"/><path d="M41 29q2-5 9-4l2 3-3 2q-3-2-5 2z" fill="#3a3e41"/><path d="M53 35q3 3 8 1l5-1 1-3-4-2-3 2-4-1z" fill="#33373a"/><path d="M34 29h5" stroke="#999" stroke-width=".5"/></svg><div class="t" style="left:5px;top:31.500px;font-size:2.900px;font-weight:bold;color:#222">造型设计</div><div class="t" style="left:5px;top:36.500px;font-size:1.900px;color:#555">模块化</div><div class="a" style="left:5px;top:40.5px;width:14px;height:.5px;background:#aaa"></div><div class="a" style="left:5px;top:42.1px;width:9px;height:.5px;background:#aaa"></div></div>
<div class="th a" style="top:365.6px;background:#000;border-color:#000;left:26px;width:82px;height:46.500px"></div>
<div class="a" style="left:126px;top:0;width:9px;height:392px;background:#e9e9e9"></div>
  </div>
  <div id="main" class="a"></div>
  <div id="slide" class="a">
  <div class="t" style="left:20px;top:15.5px;color:#222"><span style="font-family:'Liberation Serif','Noto Serif CJK SC',serif;font-weight:600;font-size:11.200px">互动装置</span><span style="margin:0 6px 0 5.500px;font-size:11px;position:relative;top:-1px">|</span><span style="font-family:'Liberation Serif',serif;font-size:13.300px;letter-spacing:.42px">Interactive Installation</span></div>
<div class="t" style="left:42px;top:41.80000000000001px;font-size:18.200px;font-weight:bold;color:#222">方案概念</div>
<svg style="left:40px;top:84.300px;overflow:hidden" width="225" height="139.400" viewBox="25 25 1077 665" preserveAspectRatio="none"><defs><filter id="fb" x="-5%" y="-5%" width="110%" height="110%"><feGaussianBlur stdDeviation="4.500"/></filter>
<linearGradient id="gr" x1="0" y1="0" x2="0" y2="1"><stop offset="0" stop-color="#37781f"/><stop offset=".45" stop-color="#2f6a1c"/><stop offset="1" stop-color="#1c4412"/></linearGradient>
<radialGradient id="grl" cx=".5" cy=".2" r=".6"><stop offset="0" stop-color="#4a9a2a" stop-opacity=".7"/><stop offset="1" stop-color="#2f6a1c" stop-opacity="0"/></radialGradient>
<linearGradient id="bas" x1="0" y1="0" x2="1" y2="0"><stop offset="0" stop-color="#7d766a"/><stop offset=".5" stop-color="#6d665b"/><stop offset="1" stop-color="#59534a"/></linearGradient>
<linearGradient id="lamp" x1="0" y1="0" x2="0" y2="1"><stop offset="0" stop-color="#3fae3a"/><stop offset=".35" stop-color="#c9803a"/><stop offset="1" stop-color="#cf4a5a"/></linearGradient></defs>
<rect x="25" y="25" width="1077" height="665" fill="#0a0806"/>
<g filter="url(#fb)">
<rect x="25" y="25" width="420" height="270" fill="#1a150f"/>
<rect x="25" y="25" width="270" height="225" fill="#39322a"/>
<rect x="440" y="25" width="662" height="280" fill="#0b0907"/>
<path d="M255 140q-15-70 15-115h80q30 55 5 115l-30 90h-40z" fill="#12150d"/>
<rect x="104" y="25" width="9" height="280" fill="#15120e"/><rect x="164" y="25" width="11" height="280" fill="#1a1611"/>
<rect x="207" y="128" width="40" height="40" fill="#c99870"/><rect x="296" y="140" width="28" height="90" fill="#7a5f44"/>
<circle cx="135" cy="105" r="11" fill="#ffd9a0"/><circle cx="380" cy="33" r="10" fill="#ffe6bd"/><circle cx="421" cy="60" r="9" fill="#ffdcae"/><circle cx="28" cy="150" r="8" fill="#e9b57c"/>
<path d="M25 105q30-10 60 10v60h-60z" fill="#1a1610"/><rect x="30" y="170" width="45" height="110" fill="#2a2018"/>
<path d="M185 175h80v60h-80z" fill="#1b1712"/>
<rect x="25" y="240" width="440" height="70" fill="#17120c"/>
<path d="M25 380h1077v140h-1077z" fill="#2a1f11"/>
<path d="M25 420h300v95h-300z" fill="#3d2e15"/><path d="M800 440h302v80h-302z" fill="#3a2c16"/>
<path d="M540 30l-25 60-70 150M545 30l-60 80-40 140M548 30l-10 50-60 170M552 30l30 40 40 120M546 30l-90 60-60 150" stroke="#8a8078" stroke-width="7" fill="none" opacity=".45"/>
<path d="M520 28h60l-25 70z" fill="#8b8580" opacity=".5"/>
<path d="M1000 140q60-20 102 0v240h-102z" fill="#0d120b"/>
<!-- basin -->
<path d="M62 340v60q0 18 60 35l200 12h480l200-12q50-14 50-35v-60z" fill="url(#bas)"/>
<ellipse cx="552" cy="338" rx="492" ry="47" fill="#a59e90"/>
<ellipse cx="552" cy="336" rx="458" ry="35" fill="#626d69"/><ellipse cx="552" cy="326" rx="440" ry="20" fill="#4c5654"/>
<path d="M830 330q150 10 215 25v45q-50 20-215 35z" fill="#4a463f" opacity=".55"/>
<!-- pedestal -->
<ellipse cx="548" cy="140" rx="92" ry="12" fill="#7f7157"/><path d="M475 143q73 35 146 0l-40 26h-66z" fill="#665a44"/>
<path d="M525 165h45l14 85 40 32q10 26-12 46l-18 16h-96l-22-18q-18-24-5-46l38-30z" fill="#9c7d45"/>
<path d="M510 312h78l16 32h-110z" fill="#b58a3c"/>
</g>
<!-- grass -->
<rect x="25" y="512" width="1077" height="178" fill="url(#gr)"/><rect x="25" y="512" width="1077" height="178" fill="url(#grl)"/>
<g filter="url(#fb)">
<!-- couch -->
<path d="M305 392q0-14 22-12h420q30-4 28 18-4 16-20 14l-12 90h-408l-12-90q-18 0-18-20z" fill="#c4561f"/>
<path d="M340 400h395l-8 90h-378z" fill="#d16327"/>
<path d="M345 498h385l10 45h-405z" fill="#dc6c2a"/>
<path d="M280 462q0-22 35-20 30 4 30 30l5 125h-45q-10-80-25-135zM805 462q0-22-35-20-30 4-30 30l-5 125h45q10-80 25-135z" fill="#d4622a"/>
<path d="M330 540h425v55h-425z" fill="#c4561f"/><path d="M322 590h440v26h-440z" fill="#a3461b"/>
<path d="M335 575h415" stroke="#e8a070" stroke-width="4" opacity=".6"/>
<!-- lamp -->
<rect x="871" y="280" width="9" height="320" fill="#5d4127"/><path d="M850 622q5-30 25-36 20 6 22 36z" fill="#4a341f"/>
<path d="M822 275q10-55 58-70 50 15 58 70-58 18-116 0z" fill="url(#lamp)"/>
<circle cx="880" cy="228" r="14" fill="#5fe04a"/><path d="M822 275q58 18 116 0v10q-58 16-116 0z" fill="#e0557a"/>
</g></svg>
<svg style="left:358px;top:84.300px;overflow:hidden" width="225" height="139.400" viewBox="25 25 1077 665" preserveAspectRatio="none"><defs><filter id="sb" x="-5%" y="-5%" width="110%" height="110%"><feGaussianBlur stdDeviation="3.200"/></filter></defs>
<rect x="25" y="25" width="1077" height="665" fill="#dfe2e4"/>
<g filter="url(#sb)">
<rect x="25" y="25" width="1077" height="110" fill="#e4e6e7"/>
<rect x="25" y="25" width="68" height="262" fill="#26332b"/><rect x="40" y="40" width="30" height="230" fill="#34463a"/>
<rect x="120" y="30" width="60" height="380" fill="#eceeef"/>
<!-- window -->
<rect x="370" y="25" width="440" height="280" fill="#23282c"/>
<rect x="382" y="32" width="418" height="68" fill="#596368"/><path d="M400 50h380" stroke="#8d989e" stroke-width="10"/><rect x="540" y="28" width="110" height="12" fill="#cfd6da"/>
<rect x="378" y="122" width="424" height="176" fill="#93a3a8"/><rect x="378" y="122" width="424" height="40" fill="#b5c4c9"/>
<path d="M385 135l55 70M560 130l15 90" stroke="#e8f3f8" stroke-width="12"/><rect x="480" y="235" width="120" height="28" fill="#e9eef0"/><rect x="385" y="180" width="410" height="60" fill="#a9b8bd" opacity=".6"/>
<rect x="600" y="150" width="40" height="100" fill="#6a787e"/><rect x="720" y="150" width="70" height="140" fill="#75858b"/>
<ellipse cx="470" cy="230" rx="28" ry="50" fill="#6d6a60"/>
<rect x="820" y="30" width="150" height="110" fill="#e9ebec"/>
<!-- right door -->
<rect x="1056" y="48" width="46" height="265" fill="#39444a"/><rect x="1058" y="25" width="44" height="26" fill="#e6c32a"/><rect x="1058" y="180" width="44" height="30" fill="#5c8a4a"/><ellipse cx="1075" cy="75" rx="18" ry="9" fill="#e8eef0"/>
<!-- bench + floor -->
<rect x="25" y="480" width="1077" height="125" fill="#7a8085"/>
<rect x="25" y="600" width="1077" height="90" fill="#32363e"/>
<rect x="168" y="486" width="810" height="26" fill="#c3c7ca"/>
<rect x="168" y="512" width="810" height="95" fill="#5d6368"/><path d="M175 540h800M175 575h800" stroke="#8b9196" stroke-width="7"/>
<rect x="155" y="612" width="830" height="26" fill="#9ca0a5"/>
<rect x="25" y="585" width="145" height="20" fill="#c9ccce"/><rect x="985" y="570" width="117" height="18" fill="#c4c7ca"/>
<!-- person1 -->
<path d="M145 270q10-25 90-18l70 30 12 120-170 20z" fill="#17181a"/>
<path d="M110 410l210-10 5 80-120 15-95-5z" fill="#4f4838"/>
<path d="M60 460q10-40 70-40l110 10-10 65-100 5-15 170h-55q-10-120 0-210z" fill="#c48255"/>
<path d="M215 440h65l-8 225h-45z" fill="#b97a50"/>
<path d="M130 365q40-15 100 5l10 45-60 10-50-30z" fill="#c98859"/>
<ellipse cx="188" cy="225" rx="40" ry="48" fill="#c78a5e"/><path d="M140 210q0-48 48-46 40 4 38 40-40-14-86 6z" fill="#15130f"/>
<path d="M25 672q40-24 100-8v26h-100zM232 662q25-10 44 0v28h-44z" fill="#101114"/>
<!-- poles -->
<rect x="88" y="25" width="24" height="240" fill="#b62a3c"/><rect x="96" y="260" width="16" height="150" fill="#a9acaf"/>
<rect x="265" y="25" width="33" height="172" fill="#c12a3c"/><rect x="265" y="195" width="33" height="495" fill="#a6a9ac"/><rect x="270" y="195" width="9" height="495" fill="#cfd2d4"/>
<!-- person2 woman -->
<path d="M355 330q-8-150 45-152 55 4 52 150l-20 15-15-70-35 2z" fill="#3a2a22"/>
<ellipse cx="405" cy="240" rx="23" ry="32" fill="#c98f68"/>
<path d="M325 300q40-20 110 0l20 95-15 30-100 60-20-10z" fill="#d9b21f"/>
<path d="M322 300l30-15 18 120-40 30zM430 300l28 25 8 85-30 5z" fill="#cf946a"/>
<path d="M360 345q50-15 80 10l5 50-85 10z" fill="#1f1d1c"/>
<path d="M365 420q60-30 105 0l-5 80-95 10z" fill="#141416"/>
<path d="M395 500l60-10 70 140-30 12-50-100-50 140h-35z" fill="#d19a72"/>
<path d="M480 640q40-20 70-5l-5 14-60 4zM355 678q25-12 48 0v12h-48z" fill="#2a2522"/>
<!-- person3 girl -->
<path d="M480 350q55-25 115 0l-5 115-105 5z" fill="#ee6f3a"/><path d="M510 365l35 55 35-55z" fill="#e8524a"/>
<ellipse cx="548" cy="318" rx="33" ry="34" fill="#16130f"/><rect x="540" y="270" width="26" height="20" rx="6" fill="#e86a9a"/>
<path d="M478 360l20-5 10 90-25 5zM580 355l18 8 0 85-22-2z" fill="#d9a27c"/>
<path d="M495 465h80l-5 130h-25l-8-95-12 95h-25z" fill="#d6a07a"/><rect x="500" y="440" width="80" height="18" fill="#2a2a30"/>
<path d="M530 590h55v25h-55z" fill="#1a1714"/>
<!-- person4 man pink -->
<path d="M588 300q10-40 70-45 70 0 85 40l15 75-40 15-5 35h-110l-5-50z" fill="#e59a9a"/>
<path d="M600 270l50 20 55-25" stroke="#f4d0cc" stroke-width="10" fill="none"/>
<ellipse cx="675" cy="222" rx="33" ry="42" fill="#d8a07a"/><path d="M640 205q0-42 38-40 36 4 32 42-34-20-70-2z" fill="#5d4126"/>
<path d="M600 395l140 5 8 80-60 10 30 90-60 30-40-130z" fill="#5b7fb2"/>
<path d="M640 560l70-10 5 100h-65z" fill="#54759f"/><path d="M700 430l45 10 0 60-50 0z" fill="#6b8fc0"/>
<path d="M705 580q35-20 55 20l35 35q-5 25-45 25l-40-40z" fill="#2a2c33"/><path d="M740 640l50-12 5 18-45 16z" fill="#e8e8e8"/>
<path d="M640 665q25-18 50 0v25h-50z" fill="#3a3d45"/>
<path d="M600 380l90 20 50-15-5 30-60 15-70-20z" fill="#d8a27c"/>
<!-- person5 white T -->
<path d="M755 310q50-30 115 5l5 125-125 10z" fill="#eef0f0"/><rect x="790" y="365" width="70" height="45" fill="#d9c25a"/><rect x="800" y="400" width="70" height="16" fill="#3a6aa0"/>
<ellipse cx="845" cy="275" rx="32" ry="36" fill="#d6a47e"/><path d="M806 270q-5-52 42-50 44 4 38 56-20 28-40 12-24-8-40-18z" fill="#121114"/>
<path d="M745 440l160-5 8 60-90 30-75-25z" fill="#8c8874"/>
<path d="M795 510l55 0-8 110h-40zM850 495l55-5-15 120h-38z" fill="#d3a07a"/>
<path d="M745 330l25-10 10 100 80 15-5 22-100-12zM870 430l20 5-10 20-20-3z" fill="#d3a07a"/>
<path d="M792 610h50l8 70q-25 18-50 0zM838 603h50l10 65q-22 20-48 6z" fill="#eeeeea"/>
<!-- person6 navy -->
<path d="M878 325q50-25 110 0l10 100-115 10z" fill="#252f4a"/><rect x="925" y="350" width="45" height="50" fill="#6d7fa8"/>
<ellipse cx="950" cy="262" rx="30" ry="34" fill="#d3a27c"/><path d="M918 255q-2-38 34-36 34 4 32 36-34-14-66 0z" fill="#131215"/>
<path d="M935 305l40-15 20 15-15 35-50 50-40 20-5-30 50-45z" fill="#d0a07a"/><rect x="955" y="292" width="38" height="14" fill="#e8e8e8"/>
<path d="M890 425l125-5 20 40-40 25-95 0z" fill="#1f2126"/>
<path d="M910 460q30-20 55 0l-20 150h-40zM1010 460q40-15 65 15l-25 140h-40z" fill="#d3a27c"/>
<path d="M880 615q20-15 45 0l5 55q-25 15-50 0zM1005 615q30-10 50 5l25 50q-20 20-55 10z" fill="#16171b"/>
<!-- right poles -->
<rect x="1040" y="60" width="17" height="232" fill="#b92c3d"/><rect x="1040" y="290" width="15" height="150" fill="#a9acaf"/>
<path d="M1010 25h36v200h-34z" fill="#c02a3b"/><path d="M1005 225h38l-25 465h-38z" fill="#a4a7aa"/><path d="M1012 225h10l-25 465h-9z" fill="#d0d3d5"/>
</g></svg>
<div class="a" style="left:310.700px;top:36.500px;width:1px;height:247px;background:#ececec"></div>
<div class="t" style="left:42px;top:264px;font-size:12.100px;font-weight:bold;color:#222;letter-spacing:-.1px">COMMUNICATION</div>
<div class="t" style="left:42.5px;top:287.5px;font-size:6.300px;color:#9a9a9a;letter-spacing:.45px">来自老友记的一段，朋友们亲密无间，一起坐在</div>
<div class="t" style="left:42.5px;top:299px;font-size:6.300px;color:#9a9a9a;letter-spacing:.45px">沙发上，互相可以感受到对方的动作。</div>
<div class="t" style="left:360px;top:265.3px;font-size:11.800px;font-weight:bold;color:#222">冷漠社交</div>
<div class="t" style="left:360px;top:287.8px;font-size:6.300px;color:#9a9a9a;letter-spacing:.45px">地铁上人们虽然坐的很近，但对彼此毫不关心，</div>
<div class="t" style="left:360px;top:299.29999999999995px;font-size:6.300px;color:#9a9a9a;letter-spacing:.45px">而是各自扣手机。</div>
<svg style="left:296px;top:254px" width="9" height="14" viewBox="0 0 9 14"><path d="M.7.800v10l2.300-2 1.700 4 1.600-.7-1.700-3.900h3.200z" fill="#fff" stroke="#333" stroke-width=".9"/></svg>
  </div>
  <div id="notes" class="a"><div class="t" style="left:7.500px;top:6.500px;font-size:9.700px;color:#555">点击此处添加备注</div></div>
  <div id="status" class="a">
  <div class="t" style="left:10px;font-size:8px;color:#555;top:6.500px">幻灯片 第 28 张，共 61 张</div>
<svg style="left:125px;top:4.500px" width="12" height="8" viewBox="0 0 12 8"><path d="M.5.500h5v7h-5zM6.500.500h5v7h-5z" fill="none" stroke="#777" stroke-width=".9"/></svg>
<div class="t" style="left:155px;font-size:8px;color:#555;top:6.500px">中文(中国)</div>
<svg style="left:488px;top:6px" width="7" height="6" viewBox="0 0 7 6"><path d="M3.500 0l3 4h-6z" fill="#555"/></svg>
<div class="t" style="left:497px;font-size:8px;color:#555;top:6.500px">备注</div>
<div class="a" style="left:536px;top:6px;width:10px;height:6px;background:#555"></div>
<div class="t" style="left:548px;font-size:8px;color:#555;top:6.500px">批注</div>
<div class="a" style="left:583px;top:1px;width:28px;height:10px;background:#d3d3d3"></div>
<div class="a" style="left:592px;top:6px;width:10px;height:6px;border:1px solid #666"></div>
<svg style="left:622px;top:6px" width="10" height="5" viewBox="0 0 10 5"><path d="M.5.500h3.500v5h-3.500zM6 .5h3.500v5h-3.500z" fill="none" stroke="#666" stroke-width=".9"/></svg>
<svg style="left:652px;top:6px" width="10" height="5" viewBox="0 0 10 5"><path d="M.5.500h9v5h-9zM5 .5v5" fill="none" stroke="#666" stroke-width=".9"/></svg>
<svg style="left:682px;top:6px" width="10" height="5" viewBox="0 0 10 5"><path d="M0 .5h10M1.500.500v5h7v-5" fill="none" stroke="#666" stroke-width=".9"/></svg>
<div class="a" style="left:698px;top:7.500px;width:5px;height:1px;background:#555"></div>
<div class="a" style="left:737px;top:7px;width:2px;height:4px;background:#555"></div>
<div class="a" style="left:783px;top:6px;width:1px;height:4px;background:#555"></div>
<div class="t" style="left:799px;font-size:8px;color:#555;top:6.500px">74%</div>
<div class="a" style="left:830px;top:5.500px;width:9px;height:6px;border:1px solid #666"></div>
  </div>
</div>

<!-- share label -->
<div class="a" style="left:0;top:672px;width:98px;height:16px;background:#1b1c1e;color:#fff">
  <div class="t" style="left:22px;top:2.500px;font-size:10.600px;color:#fff">李力的屏幕共享</div>
</div>

<!-- VIDEO COLUMN -->
<div id="vcol" class="a">
<div class="tile a" style="top:33.4px;border-color:#218a58"><div class="av a"><svg width="46" height="46" viewBox="0 0 46 46" style="left:0;top:0"><rect width="46" height="46" fill="#14181b"/>
<rect x="0" y="8" width="13" height="25" fill="#bfe1e4"/><rect x="35" y="8" width="11" height="27" fill="#a5d0d4"/>
<rect x="1" y="22" width="10" height="5" fill="#5f9a9c"/><rect x="5" y="9" width="3" height="13" fill="#f4fbfb"/>
<rect x="39" y="9" width="3" height="12" fill="#eef8f8"/><ellipse cx="42" cy="29" rx="2" ry="3" fill="#2d4a4f"/>
<path d="M0 46V33q8-3 16-2l8 8 10-8q7 0 12 3v12z" fill="#12161a"/>
<path d="M17 30h19l-3 10-7 6h-5z" fill="#dcc2b0"/><path d="M20 44l3-2 4 2v2h-7z" fill="#e9e9e9"/>
<ellipse cx="23" cy="17.500" rx="14" ry="16.500" fill="#e7d3c3"/>
<path d="M9 17q0 9 6 14l3-3q-5-6-5-14z" fill="#d6bba9"/>
<path d="M7 14q0-14 16-14 16 0 16 14-1-7-4-10-12-3-24 0-3 3-4 10z" fill="#14171a"/>
<ellipse cx="15.500" cy="12" rx="2.600" ry="1" fill="#4a3a35"/><ellipse cx="29" cy="12.500" rx="2.600" ry="1" fill="#4a3a35"/>
<path d="M12 9.500q3-1.500 6-.5M26 9.500q3-1.500 6 0" stroke="#7a655b" stroke-width=".8" fill="none"/>
<path d="M21 21q1.500 1 3.500 0" stroke="#c9a793" stroke-width="1" fill="none"/>
<path d="M18.500 27.500q3.500 1.200 8 0" stroke="#c98a80" stroke-width="1.500" fill="none"/></svg></div><div class="lb a"><svg style="position:static;flex:none;margin:0 1px 0 0" width="9" height="9" viewBox="0 0 10 10"><rect x=".5" y="1" width="9" height="6" rx=".8" fill="#fff"/><path d="M3 5.500q.5-2 3-2v-1l2 1.600-2 1.600v-1q-1.800 0-3 .8z" fill="#222"/><rect x="3" y="8" width="4" height="1.200" fill="#fff"/></svg><svg style="position:static;flex:none;margin:0 2px 0 2px" width="9" height="11" viewBox="0 0 9 11"><rect x="2.800" y=".5" width="3.400" height="6" rx="1.700" fill="#2fd15a"/><path d="M1.200 5q0 3.300 3.300 3.300t3.300-3.300M4.500 8.300v1.500M3 10h3" stroke="#fff" stroke-width=".9" fill="none"/></svg><span>李力的屏幕共享</span></div></div>
<div class="tile a" style="top:134.6px"><div class="av a"><svg width="46" height="46" viewBox="0 0 46 46" style="left:0;top:0"><rect width="46" height="46" fill="#b9e1f3"/>
<path d="M7 46q0-17 11-21l5-1 5 1q11 4 11 21z" fill="#f6f7fa"/>
<path d="M20 21h6.500v5l-3.200 2.500-3.300-2.500z" fill="#efd6cb"/>
<ellipse cx="23.200" cy="15.500" rx="5.700" ry="7.500" fill="#f3e1d8"/>
<path d="M16.800 15q-1.500-11.500 6.400-12 8 .5 6.400 12-1-4.500-2.200-5.500-4.500 1.500-8.400 0-1.200 1-2.200 5.500z" fill="#1d1a1a"/>
<path d="M21 19.800q2.200 1 4.400 0" stroke="#d9a79a" stroke-width=".7" fill="none"/></svg></div><div class="lb a"><div style="flex:none;width:13px;height:14px;background:#f5822a;position:relative;margin-left:-2px;margin-right:2px"><svg style="left:2px;top:2px" width="9" height="10" viewBox="0 0 9 10"><circle cx="4.500" cy="2.800" r="2.300" fill="#fff"/><path d="M0 10q0-4.500 4.500-4.500t4.500 4.500z" fill="#fff"/></svg></div><svg style="position:static;flex:none;margin:0 3px 0 2px" width="9" height="11" viewBox="0 0 9 11"><rect x="3" y="1" width="3" height="5.500" rx="1.500" fill="#fff"/><path d="M1.500 5q0 3 3 3t3-3M4.500 8v1.500M3 9.800h3" stroke="#fff" stroke-width=".9" fill="none"/><path d="M8 1L1.200 9.500" stroke="#e5343a" stroke-width="1.100"/></svg><span>刘书宇</span></div></div>
<div class="tile a" style="top:235.8px"><div class="av a"><svg width="46" height="46" viewBox="0 0 46 46" style="left:0;top:0"><rect width="46" height="46" fill="#b3954c"/>
<rect width="46" height="18" fill="#63642d"/><ellipse cx="14" cy="9" rx="10" ry="6" fill="#4f5425"/><ellipse cx="34" cy="8" rx="9" ry="5" fill="#575a28"/>
<rect y="17" width="46" height="9" fill="#86775a"/><rect x="38" y="14" width="8" height="8" fill="#9a7a4a"/>
<rect y="26" width="46" height="20" fill="#b3954c"/><rect y="36" width="46" height="10" fill="#a88a42"/>
<path d="M8 25.500l7 1 4-3 8-1 8 4q4 3 3 8l-2 5-2.500-.5.500-6-6-2-8 5-3 5-2.500-1 1.500-6-4-5-4.500-1z" fill="#efe3d2"/>
<path d="M20 30l13-9 4 4q1 3-1 5l-8 2-6 2z" fill="#e0954a"/>
<ellipse cx="24.600" cy="14.500" rx="7" ry="6.400" fill="#f3e6d4"/>
<path d="M17.500 11.500l1.500-4.500 3 2.500zM31.500 11l-1.800-4.500-2.700 2.800z" fill="#d99a55"/>
<ellipse cx="24.300" cy="17.200" rx="3.400" ry="2.300" fill="#e0708a"/><path d="M21 15.200q3.300-1.500 6.600 0" stroke="#2a1d18" stroke-width="1" fill="none"/>
<ellipse cx="24.300" cy="13.400" rx="1.300" ry=".9" fill="#2a1d18"/><circle cx="21.300" cy="11.800" r=".7" fill="#2a1d18"/><circle cx="27.400" cy="11.800" r=".7" fill="#2a1d18"/></svg></div><div class="lb a"><span style="margin-left:2px">荷城 研究生院</span></div></div>
<div class="tile a" style="top:337.0px"><div class="av a"><svg width="46" height="46" viewBox="0 0 46 46" style="left:0;top:0"><rect width="46" height="46" fill="#2f5a3b"/>
<rect x="0" y="0" width="46" height="10" fill="#3d6b52"/>
<path d="M30 4l8 3 4 10-6 6-8-4z" fill="#8b9a8e"/><path d="M6 6l8 4-2 10-8-3z" fill="#4e7a55"/>
<ellipse cx="24" cy="15" rx="5" ry="5.500" fill="#f0d9c6"/><path d="M18 13q6-8 12 0l1 8h-3v-6q-4-2-8 0v6h-3z" fill="#2b2320"/>
<path d="M18 21h12l2 5h-16z" fill="#c9d4d8"/>
<path d="M2 46q-1-20 21-21 22 1 21 21z" fill="#1f8fd9"/>
<path d="M7 46q0-14 16-15 16 1 16 15z" fill="#fff"/>
<ellipse cx="18" cy="30" rx="5" ry="6" fill="#fff" stroke="#222" stroke-width=".8"/><ellipse cx="28" cy="30" rx="5" ry="6" fill="#fff" stroke="#222" stroke-width=".8"/>
<circle cx="20" cy="31" r="1.300" fill="#111"/><circle cx="26" cy="31" r="1.300" fill="#111"/>
<circle cx="23" cy="36" r="2.600" fill="#d9212c"/></svg></div><div class="lb a"><svg style="position:static;flex:none;margin:0 3px 0 2px" width="9" height="11" viewBox="0 0 9 11"><rect x="3" y="1" width="3" height="5.500" rx="1.500" fill="#fff"/><path d="M1.500 5q0 3 3 3t3-3M4.500 8v1.500M3 9.800h3" stroke="#fff" stroke-width=".9" fill="none"/><path d="M8 1L1.200 9.500" stroke="#e5343a" stroke-width="1.100"/></svg><span>LYH</span></div></div>
<div class="tile a" style="top:438.2px"><div class="av a" style="background:#0a6cff;color:#fff;font-size:15px;text-align:center;line-height:46px">H</div><div class="lb a"><svg style="position:static;flex:none;margin:0 3px 0 2px" width="9" height="11" viewBox="0 0 9 11"><rect x="3" y="1" width="3" height="5.500" rx="1.500" fill="#fff"/><path d="M1.500 5q0 3 3 3t3-3M4.500 8v1.500M3 9.800h3" stroke="#fff" stroke-width=".9" fill="none"/><path d="M8 1L1.200 9.500" stroke="#e5343a" stroke-width="1.100"/></svg><span>HQY</span></div></div>
<div class="tile a" style="top:539.4px"><div class="av a"><svg width="46" height="46" viewBox="0 0 46 46" style="left:0;top:0"><rect width="46" height="46" fill="#c81f1c"/>
<path d="M0 22q0-22 23-22 23 0 23 22z" fill="#d62420"/>
<path d="M21 0h4l1 14h-6z" fill="#f05a50"/>
<path d="M0 17q23-8 46 0v8q-23-7-46 0z" fill="#f2f2f4"/>
<path d="M4 46q-3-22 19-22 22 0 19 22z" fill="#f0a52a"/>
<path d="M9 46q-3-18 14-18 17 0 14 18z" fill="#f7f3ee"/>
<ellipse cx="17.500" cy="33" rx="3" ry="3.600" fill="#3b5ea8"/><ellipse cx="28.500" cy="33" rx="3" ry="3.600" fill="#3b5ea8"/>
<ellipse cx="23" cy="41" rx="2" ry="1.500" fill="#6fb4e8"/><text x="23" y="22" font-size="5" font-weight="bold" fill="#2a3f8f" text-anchor="middle" font-family="'Liberation Sans','Noto Sans CJK SC',sans-serif">必胜</text></svg></div><div class="lb a"><svg style="position:static;flex:none;margin:0 3px 0 2px" width="9" height="11" viewBox="0 0 9 11"><rect x="3" y="1" width="3" height="5.500" rx="1.500" fill="#fff"/><path d="M1.500 5q0 3 3 3t3-3M4.500 8v1.500M3 9.800h3" stroke="#fff" stroke-width=".9" fill="none"/><path d="M8 1L1.200 9.500" stroke="#e5343a" stroke-width="1.100"/></svg><span>21钱昊哲</span></div></div>
</div>

<!-- RIGHT PANEL -->
<div id="panel" class="a">
<div class="a" style="left:0;top:0;width:1px;height:668px;background:#111"></div>
<div class="a" style="left:1px;top:0;width:244px;height:19px;background:#efefef;border-bottom:1px solid #d9d9d9;border-top:1px solid #e6e6e6"></div>
<div class="a" style="left:113px;top:0;width:113px;height:19px;background:#fff;border-left:1px solid #dcdcdc;border-right:1px solid #dcdcdc"></div>
<svg style="left:4px;top:5px" width="9" height="9" viewBox="0 0 9 9"><path d="M.5.500h8v6h-5l-1.800 1.800v-1.800h-1.200z" fill="#8f8f8f"/><circle cx="2.700" cy="3.500" r=".6" fill="#fff"/><circle cx="4.500" cy="3.500" r=".6" fill="#fff"/><circle cx="6.300" cy="3.500" r=".6" fill="#fff"/></svg>
<div class="t" style="left:15.500px;top:5.600px;font-size:8.200px;color:#222">聊天</div>
<svg style="left:117px;top:4.500px" width="10" height="10" viewBox="0 0 10 10"><circle cx="5" cy="2.800" r="2.300" fill="#8f8f8f"/><path d="M.3 9.800q0-4.300 4.700-4.300t4.700 4.300z" fill="#8f8f8f"/></svg>
<div class="t" style="left:129px;top:5.600px;font-size:8px;color:#222">管理成员(86)</div>
<svg style="left:206px;top:8.500px" width="9" height="2" viewBox="0 0 9 2"><circle cx="1" cy="1" r=".9" fill="#333"/><circle cx="4.500" cy="1" r=".9" fill="#333"/><circle cx="8" cy="1" r=".9" fill="#333"/></svg>
<svg style="left:218px;top:6.500px" width="6" height="6" viewBox="0 0 6 6"><path d="M.3.300l5.400 5.400M5.700.300L.3 5.700" stroke="#222" stroke-width=".9"/></svg>
<svg style="left:233px;top:7.500px" width="5.500" height="5" viewBox="0 0 6 6"><path d="M0 .5h6M0 3h6M0 5.500h6" stroke="#b5b5b5" stroke-width="1.100"/></svg>
<div class="a" style="left:8px;top:22px;width:229px;height:20px;border:1px solid #dcdcdc;border-radius:3px;background:#fff"></div>
<svg style="left:14px;top:27.500px" width="9" height="9" viewBox="0 0 9 9"><circle cx="3.800" cy="3.800" r="3" fill="none" stroke="#555" stroke-width=".9"/><path d="M6 6l2.300 2.300" stroke="#555" stroke-width=".9"/></svg>
<div class="t" style="left:24px;top:28px;font-size:8px;color:#9a9a9a">搜索成员</div>
<div class="row a" style="top:52.4px">
<div class="av a"><svg width="20" height="20" viewBox="0 0 20 20" style="left:0;top:0"><rect width="20" height="20" fill="#b9e1f3"/><path d="M3 20q0-7.500 5-9.300l2-.4 2 .4q5 1.800 5 9.300z" fill="#f6f7fa"/><ellipse cx="10.100" cy="6.800" rx="2.500" ry="3.300" fill="#f3e1d8"/><path d="M7.300 6.500q-.6-5 2.800-5.200 3.400.2 2.800 5.200-.5-2-1-2.400-2 .6-3.600 0-.5.400-1 2.400z" fill="#1d1a1a"/></svg></div>
<div class="nm t" style="top:6px">刘书宇</div><div class="t" style="left:39px;top:17.500px;font-size:8px;color:#666">(主持人, 我)</div>
<svg style="left:192.3px;top:9.5px" width="10" height="10" viewBox="0 0 10 10"><circle cx="5" cy="5" r="4.300" fill="#fff" stroke="#f2a9a6" stroke-width=".8"/><circle cx="5" cy="5" r="2.600" fill="#ee3b37"/></svg>
<svg style="left:208.3px;top:8.5px" width="10" height="12" viewBox="0 0 10 12"><rect x="3.300" y="1.500" width="3.400" height="5.800" rx="1.700" fill="#cdcdcd"/><path d="M1.800 6q0 3.200 3.200 3.200t3.200-3.200M5 9.200v1.600M3.300 11h3.400" stroke="#cdcdcd" stroke-width=".8" fill="none"/><path d="M8.800 1L1.300 10.500" stroke="#ef7f86" stroke-width=".9"/></svg>
<svg style="left:223.3px;top:10.0px" width="11" height="9" viewBox="0 0 11 9"><rect x=".5" y="1.800" width="6.800" height="5.400" rx=".8" fill="#d2d2d2"/><path d="M7.500 4.500l3-2.300v4.600z" fill="#d2d2d2"/><path d="M.3 7.800L10.700 1.200" stroke="#ef7f86" stroke-width=".9"/></svg>
</div>
<div class="row a" style="top:81.5px">
<div class="av a"><svg width="20" height="20" viewBox="0 0 20 20" style="left:0;top:0"><rect width="20" height="20" fill="#14181b"/><rect y="4" width="6" height="10" fill="#bfe1e4"/><rect x="15" y="4" width="5" height="11" fill="#a5d0d4"/><path d="M0 20v-6l7-1 3.500 3.500 4.500-3.500 5 1v6z" fill="#12161a"/><path d="M7.500 13h8l-1.500 5-3 2h-2z" fill="#dcc2b0"/><ellipse cx="10" cy="7.600" rx="6" ry="7.200" fill="#e7d3c3"/><path d="M3 6q0-6 7-6 7 0 7 6-1-3-2-4.500-5-1.200-10 0-1 1.500-2 4.500z" fill="#14171a"/></svg></div>
<div class="nm t">李力</div>
<svg style="left:208.3px;top:8.5px" width="10" height="12" viewBox="0 0 10 12"><rect x="3.300" y="1.500" width="3.400" height="5.800" rx="1.700" fill="#cdcdcd"/><path d="M1.800 6q0 3.200 3.200 3.200t3.200-3.200M5 9.200v1.600M3.300 11h3.400" stroke="#cdcdcd" stroke-width=".8" fill="none"/><path d="M8.800 1L1.300 10.500" stroke="#ef7f86" stroke-width=".9"/></svg>
<svg style="left:223.3px;top:10.0px" width="11" height="9" viewBox="0 0 11 9"><rect x=".5" y="1.800" width="6.800" height="5.400" rx=".8" fill="#d2d2d2"/><path d="M7.500 4.500l3-2.300v4.600z" fill="#d2d2d2"/><path d="M.3 7.800L10.700 1.200" stroke="#ef7f86" stroke-width=".9"/></svg>
</div>
<div class="row a" style="top:110.6px">
<div class="av a"><svg width="20" height="20" viewBox="0 0 20 20" style="left:0;top:0"><rect width="20" height="20" fill="#2f5a3b"/><rect width="20" height="5" fill="#3d6b52"/><ellipse cx="10.500" cy="6.500" rx="2.200" ry="2.400" fill="#f0d9c6"/><path d="M8 6q2.500-3.500 5 0v3h-5z" fill="#2b2320"/><path d="M1 20q0-9 9-9 9 0 9 9z" fill="#1f8fd9"/><path d="M3 20q0-6 7-6.500 7 .5 7 6.500z" fill="#fff"/><ellipse cx="8" cy="13" rx="2.200" ry="2.600" fill="#fff" stroke="#222" stroke-width=".4"/><ellipse cx="12" cy="13" rx="2.200" ry="2.600" fill="#fff" stroke="#222" stroke-width=".4"/><circle cx="10" cy="15.600" r="1.200" fill="#d9212c"/><path d="M5 18q5 3 10 0" stroke="#d9212c" stroke-width=".8" fill="none"/></svg></div>
<div class="nm t">LYH</div>
<svg style="left:192.3px;top:9.5px" width="10" height="10" viewBox="0 0 10 10"><circle cx="5" cy="5" r="4.300" fill="#fff" stroke="#f2a9a6" stroke-width=".8"/><circle cx="5" cy="5" r="2.600" fill="#ee3b37"/></svg>
<svg style="left:208.3px;top:8.5px" width="10" height="12" viewBox="0 0 10 12"><rect x="3.300" y="1.500" width="3.400" height="5.800" rx="1.700" fill="#cdcdcd"/><path d="M1.800 6q0 3.200 3.200 3.200t3.200-3.200M5 9.200v1.600M3.300 11h3.400" stroke="#cdcdcd" stroke-width=".8" fill="none"/><path d="M8.800 1L1.300 10.500" stroke="#ef7f86" stroke-width=".9"/></svg>
<svg style="left:223.3px;top:10.0px" width="11" height="9" viewBox="0 0 11 9"><rect x=".5" y="1.800" width="6.800" height="5.400" rx=".8" fill="#d2d2d2"/><path d="M7.500 4.500l3-2.300v4.600z" fill="#d2d2d2"/><path d="M.3 7.800L10.700 1.200" stroke="#ef7f86" stroke-width=".9"/></svg>
</div>
<div class="row a" style="top:139.6px">
<div class="av a" style="background:#0a6cff;color:#fff;font-size:7.8px;text-align:center;line-height:20px;letter-spacing:-.3px">子裕</div>
<div class="nm t">张子裕</div>
<svg style="left:192.3px;top:9.5px" width="10" height="10" viewBox="0 0 10 10"><circle cx="5" cy="5" r="4.300" fill="#fff" stroke="#f2a9a6" stroke-width=".8"/><circle cx="5" cy="5" r="2.600" fill="#ee3b37"/></svg>
<svg style="left:208.3px;top:8.5px" width="10" height="12" viewBox="0 0 10 12"><rect x="3.300" y="1.500" width="3.400" height="5.800" rx="1.700" fill="#cdcdcd"/><path d="M1.800 6q0 3.200 3.200 3.200t3.200-3.200M5 9.200v1.600M3.300 11h3.400" stroke="#cdcdcd" stroke-width=".8" fill="none"/><path d="M8.800 1L1.300 10.500" stroke="#ef7f86" stroke-width=".9"/></svg>
<svg style="left:223.3px;top:10.0px" width="11" height="9" viewBox="0 0 11 9"><rect x=".5" y="1.800" width="6.800" height="5.400" rx=".8" fill="#d2d2d2"/><path d="M7.500 4.500l3-2.300v4.600z" fill="#d2d2d2"/><path d="M.3 7.800L10.700 1.200" stroke="#ef7f86" stroke-width=".9"/></svg>
</div>
<div class="row a" style="top:168.7px">
<div class="nm t">赵子颐</div>
<svg style="left:208.3px;top:9.5px" width="10" height="10" viewBox="0 0 10 10"><circle cx="5" cy="5" r="4.300" fill="#fff" stroke="#f2a9a6" stroke-width=".8"/><circle cx="5" cy="5" r="2.600" fill="#ee3b37"/></svg>
<svg style="left:224.0px;top:8.5px" width="10" height="12" viewBox="0 0 10 12"><rect x="3.300" y="1.500" width="3.400" height="5.800" rx="1.700" fill="#cdcdcd"/><path d="M1.800 6q0 3.200 3.200 3.200t3.200-3.200M5 9.200v1.600M3.300 11h3.400" stroke="#cdcdcd" stroke-width=".8" fill="none"/><path d="M8.800 1L1.300 10.500" stroke="#ef7f86" stroke-width=".9"/></svg>
</div>
<div class="row a" style="top:197.8px">
<div class="av a"><svg width="20" height="20" viewBox="0 0 20 20" style="left:0;top:0"><rect width="20" height="20" fill="#0b3f8f"/><rect y="0" width="20" height="7" fill="#0a2f72"/><path d="M0 11q5-3 10-1t10-2v6q-5 1-10 0t-10 1z" fill="#8cc4ee"/><path d="M4 12q4-2 7-1l3 1-3 1q-4 1-7-1z" fill="#e8f4fc"/><rect y="15" width="20" height="5" fill="#0c4aa6"/></svg></div>
<div class="nm t">Sawyer_蘇</div>
<svg style="left:208.3px;top:9.5px" width="10" height="10" viewBox="0 0 10 10"><circle cx="5" cy="5" r="4.300" fill="#fff" stroke="#f2a9a6" stroke-width=".8"/><circle cx="5" cy="5" r="2.600" fill="#ee3b37"/></svg>
<svg style="left:223.3px;top:10.0px" width="11" height="9" viewBox="0 0 11 9"><rect x=".5" y="1.800" width="6.800" height="5.400" rx=".8" fill="#d2d2d2"/><path d="M7.500 4.500l3-2.300v4.600z" fill="#d2d2d2"/><path d="M.3 7.800L10.700 1.200" stroke="#ef7f86" stroke-width=".9"/></svg>
</div>
<div class="row a" style="top:226.9px">
<div class="av a"><svg width="20" height="20" viewBox="0 0 20 20" style="left:0;top:0"><rect width="20" height="20" fill="#9b9a92"/><rect y="12" width="20" height="8" fill="#b3a999"/><ellipse cx="10" cy="9" rx="5.500" ry="5" fill="#efe6d8"/><ellipse cx="10" cy="15" rx="6" ry="4" fill="#e8dccb"/><circle cx="8" cy="8.500" r=".7" fill="#222"/><circle cx="12" cy="8.500" r=".7" fill="#222"/><ellipse cx="10" cy="10.500" rx=".9" ry=".7" fill="#222"/></svg></div>
<div class="nm t">-.-</div>
<svg style="left:208.3px;top:8.5px" width="10" height="12" viewBox="0 0 10 12"><rect x="3.300" y="1.500" width="3.400" height="5.800" rx="1.700" fill="#cdcdcd"/><path d="M1.800 6q0 3.200 3.200 3.200t3.200-3.200M5 9.200v1.600M3.300 11h3.400" stroke="#cdcdcd" stroke-width=".8" fill="none"/><path d="M8.800 1L1.300 10.500" stroke="#ef7f86" stroke-width=".9"/></svg>
<svg style="left:223.3px;top:10.0px" width="11" height="9" viewBox="0 0 11 9"><rect x=".5" y="1.800" width="6.800" height="5.400" rx=".8" fill="#d2d2d2"/><path d="M7.500 4.500l3-2.300v4.600z" fill="#d2d2d2"/><path d="M.3 7.800L10.700 1.200" stroke="#ef7f86" stroke-width=".9"/></svg>
</div>
<div class="row a" style="top:256.0px">
<div class="av a"><svg width="20" height="20" viewBox="0 0 20 20" style="left:0;top:0"><rect width="20" height="20" fill="#8a8f7c"/><rect y="0" width="20" height="8" fill="#5e6b58"/><path d="M4 20q0-7 6-7t6 7z" fill="#d5d9cf"/><ellipse cx="10" cy="8.500" rx="3.600" ry="4" fill="#f1dccd"/><path d="M5.500 9q-.5-6 4.500-6t4.500 6q-1-3-2-3.500-3 .8-5 0-1 .5-2 3.500z" fill="#3a2b25"/><ellipse cx="8.300" cy="10.500" rx=".9" ry=".5" fill="#e99"/><ellipse cx="11.700" cy="10.500" rx=".9" ry=".5" fill="#e99"/></svg></div>
<div class="nm t">11</div>
<svg style="left:208.3px;top:8.5px" width="10" height="12" viewBox="0 0 10 12"><rect x="3.300" y="1.500" width="3.400" height="5.800" rx="1.700" fill="#cdcdcd"/><path d="M1.800 6q0 3.200 3.200 3.200t3.200-3.200M5 9.200v1.600M3.300 11h3.400" stroke="#cdcdcd" stroke-width=".8" fill="none"/><path d="M8.800 1L1.300 10.500" stroke="#ef7f86" stroke-width=".9"/></svg>
<svg style="left:223.3px;top:10.0px" width="11" height="9" viewBox="0 0 11 9"><rect x=".5" y="1.800" width="6.800" height="5.400" rx=".8" fill="#d2d2d2"/><path d="M7.500 4.500l3-2.300v4.600z" fill="#d2d2d2"/><path d="M.3 7.800L10.700 1.200" stroke="#ef7f86" stroke-width=".9"/></svg>
</div>
<div class="row a" style="top:285.0px">
<div class="av a" style="background:#0a6cff;color:#fff;font-size:8.2px;text-align:center;line-height:20px;letter-spacing:-.3px">61</div>
<div class="nm t">139****4861</div>
<svg style="left:208.3px;top:8.5px" width="10" height="12" viewBox="0 0 10 12"><rect x="3.300" y="1.500" width="3.400" height="5.800" rx="1.700" fill="#cdcdcd"/><path d="M1.800 6q0 3.200 3.200 3.200t3.200-3.200M5 9.200v1.600M3.300 11h3.400" stroke="#cdcdcd" stroke-width=".8" fill="none"/><path d="M8.800 1L1.300 10.500" stroke="#ef7f86" stroke-width=".9"/></svg>
<svg style="left:223.3px;top:10.0px" width="11" height="9" viewBox="0 0 11 9"><rect x=".5" y="1.800" width="6.800" height="5.400" rx=".8" fill="#d2d2d2"/><path d="M7.500 4.500l3-2.300v4.600z" fill="#d2d2d2"/><path d="M.3 7.800L10.700 1.200" stroke="#ef7f86" stroke-width=".9"/></svg>
</div>
<div class="row a" style="top:314.1px">
<div class="av a"><svg width="20" height="20" viewBox="0 0 20 20" style="left:0;top:0"><rect width="20" height="20" fill="#f7edd5"/><path d="M2 12q-1-11 8-11t8 11l-2 3-1-6q-5-3-10 0l-1 6z" fill="#f3a63a"/><ellipse cx="10" cy="12" rx="5.500" ry="5.500" fill="#fbe6d2"/><path d="M4 9q3-5 6-4 3-1 6 4-3-1.500-6-1.200-3-.3-6 1.200z" fill="#f0972b"/><ellipse cx="7.600" cy="12" rx="1.300" ry="1.600" fill="#3fa66b"/><ellipse cx="12.400" cy="12" rx="1.300" ry="1.600" fill="#3fa66b"/><path d="M8.500 15.500q1.500 1 3 0" stroke="#c55" stroke-width=".5" fill="none"/><circle cx="16.500" cy="5" r="1.500" fill="#d9452c"/></svg></div>
<div class="nm t">202021010161禹晓驰</div>
<svg style="left:208.3px;top:8.5px" width="10" height="12" viewBox="0 0 10 12"><rect x="3.300" y="1.500" width="3.400" height="5.800" rx="1.700" fill="#cdcdcd"/><path d="M1.800 6q0 3.200 3.200 3.200t3.200-3.200M5 9.200v1.600M3.300 11h3.400" stroke="#cdcdcd" stroke-width=".8" fill="none"/><path d="M8.800 1L1.300 10.500" stroke="#ef7f86" stroke-width=".9"/></svg>
<svg style="left:223.3px;top:10.0px" width="11" height="9" viewBox="0 0 11 9"><rect x=".5" y="1.800" width="6.800" height="5.400" rx=".8" fill="#d2d2d2"/><path d="M7.500 4.500l3-2.300v4.600z" fill="#d2d2d2"/><path d="M.3 7.800L10.700 1.200" stroke="#ef7f86" stroke-width=".9"/></svg>
</div>
<div class="row a" style="top:343.2px">
<div class="av a"><svg width="20" height="20" viewBox="0 0 20 20" style="left:0;top:0"><rect width="20" height="20" fill="#d3e6e3"/><rect x="13" width="7" height="20" fill="#c3dcd8"/><path d="M3 20q0-6 6-6.500t7 6.500z" fill="#f5f3ef"/><ellipse cx="9" cy="8.500" rx="3.400" ry="3.800" fill="#f3ddd0"/><path d="M5 9q-.5-6 4.500-6 4 0 4 5-1-2-2-2.500-2 .8-4.500.3-1 1-2 3.200z" fill="#b98a5f"/></svg></div>
<div class="nm t">202061206096-赵停停</div>
<svg style="left:208.3px;top:8.5px" width="10" height="12" viewBox="0 0 10 12"><rect x="3.300" y="1.500" width="3.400" height="5.800" rx="1.700" fill="#cdcdcd"/><path d="M1.800 6q0 3.200 3.200 3.200t3.200-3.200M5 9.200v1.600M3.300 11h3.400" stroke="#cdcdcd" stroke-width=".8" fill="none"/><path d="M8.800 1L1.300 10.500" stroke="#ef7f86" stroke-width=".9"/></svg>
<svg style="left:223.3px;top:10.0px" width="11" height="9" viewBox="0 0 11 9"><rect x=".5" y="1.800" width="6.800" height="5.400" rx=".8" fill="#d2d2d2"/><path d="M7.500 4.500l3-2.300v4.600z" fill="#d2d2d2"/><path d="M.3 7.800L10.700 1.200" stroke="#ef7f86" stroke-width=".9"/></svg>
</div>
<div class="row a" style="top:372.3px">
<div class="av a"><svg width="20" height="20" viewBox="0 0 20 20" style="left:0;top:0"><rect width="20" height="20" fill="#c9c2b8"/><rect y="13" width="20" height="7" fill="#b7ada0"/><ellipse cx="10" cy="10" rx="6" ry="5.500" fill="#efe8dd"/><path d="M4.500 7l1.500-3 2 2.500zM15.500 7l-1.500-3-2 2.500z" fill="#e3d8c8"/><circle cx="8" cy="9.500" r=".7" fill="#3a2a22"/><circle cx="12" cy="9.500" r=".7" fill="#3a2a22"/><ellipse cx="10" cy="11.800" rx="1" ry=".7" fill="#3a2a22"/><ellipse cx="10" cy="16.500" rx="4.500" ry="3" fill="#e9dfd2"/></svg></div>
<div class="nm t">202161111011王诗琪</div>
<svg style="left:208.3px;top:8.5px" width="10" height="12" viewBox="0 0 10 12"><rect x="3.300" y="1.500" width="3.400" height="5.800" rx="1.700" fill="#cdcdcd"/><path d="M1.800 6q0 3.200 3.200 3.200t3.200-3.200M5 9.200v1.600M3.300 11h3.400" stroke="#cdcdcd" stroke-width=".8" fill="none"/><path d="M8.800 1L1.300 10.500" stroke="#ef7f86" stroke-width=".9"/></svg>
<svg style="left:223.3px;top:10.0px" width="11" height="9" viewBox="0 0 11 9"><rect x=".5" y="1.800" width="6.800" height="5.400" rx=".8" fill="#d2d2d2"/><path d="M7.500 4.500l3-2.300v4.600z" fill="#d2d2d2"/><path d="M.3 7.800L10.700 1.200" stroke="#ef7f86" stroke-width=".9"/></svg>
</div>
<div class="row a" style="top:401.4px">
<div class="av a"><svg width="20" height="20" viewBox="0 0 20 20" style="left:0;top:0"><rect width="20" height="20" fill="#050505"/><ellipse cx="12" cy="9" rx="2.200" ry="3" fill="#8a7b70"/><ellipse cx="12" cy="9" rx="1" ry="1.600" fill="#e9dccf"/></svg></div>
<div class="nm t">202161111027周正恒</div>
<svg style="left:208.3px;top:8.5px" width="10" height="12" viewBox="0 0 10 12"><rect x="3.300" y="1.500" width="3.400" height="5.800" rx="1.700" fill="#cdcdcd"/><path d="M1.800 6q0 3.200 3.200 3.200t3.200-3.200M5 9.200v1.600M3.300 11h3.400" stroke="#cdcdcd" stroke-width=".8" fill="none"/><path d="M8.800 1L1.300 10.500" stroke="#ef7f86" stroke-width=".9"/></svg>
<svg style="left:223.3px;top:10.0px" width="11" height="9" viewBox="0 0 11 9"><rect x=".5" y="1.800" width="6.800" height="5.400" rx=".8" fill="#d2d2d2"/><path d="M7.500 4.500l3-2.300v4.600z" fill="#d2d2d2"/><path d="M.3 7.800L10.700 1.200" stroke="#ef7f86" stroke-width=".9"/></svg>
</div>
<div class="row a" style="top:430.4px">
<div class="av a"><svg width="20" height="20" viewBox="0 0 20 20" style="left:0;top:0"><rect width="20" height="20" fill="#000"/></svg></div>
<div class="nm t">202161211036顾志帆</div>
<svg style="left:208.3px;top:8.5px" width="10" height="12" viewBox="0 0 10 12"><rect x="3.300" y="1.500" width="3.400" height="5.800" rx="1.700" fill="#cdcdcd"/><path d="M1.800 6q0 3.200 3.200 3.200t3.200-3.200M5 9.200v1.600M3.300 11h3.400" stroke="#cdcdcd" stroke-width=".8" fill="none"/><path d="M8.800 1L1.300 10.500" stroke="#ef7f86" stroke-width=".9"/></svg>
<svg style="left:223.3px;top:10.0px" width="11" height="9" viewBox="0 0 11 9"><rect x=".5" y="1.800" width="6.800" height="5.400" rx=".8" fill="#d2d2d2"/><path d="M7.500 4.500l3-2.300v4.600z" fill="#d2d2d2"/><path d="M.3 7.800L10.700 1.200" stroke="#ef7f86" stroke-width=".9"/></svg>
</div>
<div class="row a" style="top:459.5px">
<div class="av a"><svg width="20" height="20" viewBox="0 0 20 20" style="left:0;top:0"><rect width="20" height="20" fill="#8f9a6a"/><rect width="20" height="7" fill="#b8c09a"/><path d="M4 20q-1-9 6-9t6 9z" fill="#e9d9c0"/><ellipse cx="10" cy="9" rx="4.300" ry="4" fill="#dba267"/><path d="M5.500 6.500l.8-4 2.500 2.500zM14.500 6.500l-.8-4-2.500 2.500z" fill="#d18f55"/><ellipse cx="10" cy="10.800" rx="2.200" ry="1.800" fill="#f6efe4"/><circle cx="8.300" cy="8.300" r=".6" fill="#222"/><circle cx="11.700" cy="8.300" r=".6" fill="#222"/><ellipse cx="10" cy="10.300" rx=".7" ry=".5" fill="#222"/></svg></div>
<div class="nm t">202161211062朱金津</div>
<svg style="left:208.3px;top:8.5px" width="10" height="12" viewBox="0 0 10 12"><rect x="3.300" y="1.500" width="3.400" height="5.800" rx="1.700" fill="#cdcdcd"/><path d="M1.800 6q0 3.200 3.200 3.200t3.200-3.200M5 9.200v1.600M3.300 11h3.400" stroke="#cdcdcd" stroke-width=".8" fill="none"/><path d="M8.800 1L1.300 10.500" stroke="#ef7f86" stroke-width=".9"/></svg>
<svg style="left:223.3px;top:10.0px" width="11" height="9" viewBox="0 0 11 9"><rect x=".5" y="1.800" width="6.800" height="5.400" rx=".8" fill="#d2d2d2"/><path d="M7.500 4.500l3-2.300v4.600z" fill="#d2d2d2"/><path d="M.3 7.800L10.700 1.200" stroke="#ef7f86" stroke-width=".9"/></svg>
</div>
<div class="row a" style="top:488.6px">
<div class="av a"><svg width="20" height="20" viewBox="0 0 20 20" style="left:0;top:0"><rect width="20" height="20" fill="#c81f1c"/><path d="M0 9.500q0-9.500 10-9.500t10 9.500z" fill="#d62420"/><path d="M0 7.500q10-3.500 20 0v3.500q-10-3-20 0z" fill="#f2f2f4"/><path d="M2 20q-1.500-9.500 8-9.500t8 9.500z" fill="#f0a52a"/><path d="M4 20q-1.500-8 6-8t6 8z" fill="#f7f3ee"/><ellipse cx="7.600" cy="14.500" rx="1.300" ry="1.600" fill="#3b5ea8"/><ellipse cx="12.400" cy="14.500" rx="1.300" ry="1.600" fill="#3b5ea8"/></svg></div>
<div class="nm t">21钱昊哲</div>
<svg style="left:208.3px;top:8.5px" width="10" height="12" viewBox="0 0 10 12"><rect x="3.300" y="1.500" width="3.400" height="5.800" rx="1.700" fill="#cdcdcd"/><path d="M1.800 6q0 3.200 3.200 3.200t3.200-3.200M5 9.200v1.600M3.300 11h3.400" stroke="#cdcdcd" stroke-width=".8" fill="none"/><path d="M8.800 1L1.300 10.500" stroke="#ef7f86" stroke-width=".9"/></svg>
<svg style="left:223.3px;top:10.0px" width="11" height="9" viewBox="0 0 11 9"><rect x=".5" y="1.800" width="6.800" height="5.400" rx=".8" fill="#d2d2d2"/><path d="M7.500 4.500l3-2.300v4.600z" fill="#d2d2d2"/><path d="M.3 7.800L10.700 1.200" stroke="#ef7f86" stroke-width=".9"/></svg>
</div>
<div class="row a" style="top:517.7px">
<div class="av a"><svg width="20" height="20" viewBox="0 0 20 20" style="left:0;top:0"><rect width="20" height="20" fill="#2a7f8a"/><rect y="13" width="20" height="7" fill="#1f6670"/><rect x="12" width="8" height="12" fill="#5fb0c4"/><path d="M4 18q-1-8 4-11 2-3 5-2 2 1 1.500 3.500l-2.500.5q1 3 0 9z" fill="#154d3c"/><path d="M6 9q2-3 5-2" stroke="#2c7a5c" stroke-width="1" fill="none"/></svg></div>
<div class="nm t">A</div>
<svg style="left:208.3px;top:8.5px" width="10" height="12" viewBox="0 0 10 12"><rect x="3.300" y="1.500" width="3.400" height="5.800" rx="1.700" fill="#cdcdcd"/><path d="M1.800 6q0 3.200 3.200 3.200t3.200-3.200M5 9.200v1.600M3.300 11h3.400" stroke="#cdcdcd" stroke-width=".8" fill="none"/><path d="M8.800 1L1.300 10.500" stroke="#ef7f86" stroke-width=".9"/></svg>
<svg style="left:223.3px;top:10.0px" width="11" height="9" viewBox="0 0 11 9"><rect x=".5" y="1.800" width="6.800" height="5.400" rx=".8" fill="#d2d2d2"/><path d="M7.500 4.500l3-2.300v4.600z" fill="#d2d2d2"/><path d="M.3 7.800L10.700 1.200" stroke="#ef7f86" stroke-width=".9"/></svg>
</div>
<div class="row a" style="top:546.8px">
<div class="av a"><svg width="20" height="20" viewBox="0 0 20 20" style="left:0;top:0"><rect width="20" height="20" fill="#f0f0f0"/><rect y="11.500" width="20" height="8.500" fill="#e6e6e6"/><path d="M4 11.500l2-4 1 2 3-1 .5 3z" fill="#555"/><path d="M11 11.500l3-2 3 2z" fill="#777"/><rect x="3" y="11.200" width="15" height=".8" fill="#444"/><path d="M5 13.500h10" stroke="#bbb" stroke-width=".6"/></svg></div>
<div class="nm t">Cupid</div>
<svg style="left:208.3px;top:8.5px" width="10" height="12" viewBox="0 0 10 12"><rect x="3.300" y="1.500" width="3.400" height="5.800" rx="1.700" fill="#cdcdcd"/><path d="M1.800 6q0 3.200 3.200 3.200t3.200-3.200M5 9.200v1.600M3.300 11h3.400" stroke="#cdcdcd" stroke-width=".8" fill="none"/><path d="M8.800 1L1.300 10.500" stroke="#ef7f86" stroke-width=".9"/></svg>
<svg style="left:223.3px;top:10.0px" width="11" height="9" viewBox="0 0 11 9"><rect x=".5" y="1.800" width="6.800" height="5.400" rx=".8" fill="#d2d2d2"/><path d="M7.500 4.500l3-2.300v4.600z" fill="#d2d2d2"/><path d="M.3 7.800L10.700 1.200" stroke="#ef7f86" stroke-width=".9"/></svg>
</div>
<div class="row a" style="top:575.8px">
<div class="av a"><svg width="20" height="20" viewBox="0 0 20 20" style="left:0;top:0"><rect width="20" height="20" fill="#2b2b2b"/><rect x="1" y="3" width="8" height="14" fill="#4a4a4a"/><rect x="10" y="5" width="9" height="10" fill="#1a1a1a"/><ellipse cx="6" cy="9" rx="2.500" ry="3" fill="#8a8a8a"/><rect x="12" y="7" width="5" height="6" fill="#5b5b5b"/><path d="M2 16h16" stroke="#777" stroke-width="1"/></svg></div>
<div class="nm t">DF</div>
<svg style="left:208.3px;top:8.5px" width="10" height="12" viewBox="0 0 10 12"><rect x="3.300" y="1.500" width="3.400" height="5.800" rx="1.700" fill="#cdcdcd"/><path d="M1.800 6q0 3.200 3.200 3.200t3.200-3.200M5 9.200v1.600M3.300 11h3.400" stroke="#cdcdcd" stroke-width=".8" fill="none"/><path d="M8.800 1L1.300 10.500" stroke="#ef7f86" stroke-width=".9"/></svg>
<svg style="left:223.3px;top:10.0px" width="11" height="9" viewBox="0 0 11 9"><rect x=".5" y="1.800" width="6.800" height="5.400" rx=".8" fill="#d2d2d2"/><path d="M7.500 4.500l3-2.300v4.600z" fill="#d2d2d2"/><path d="M.3 7.800L10.700 1.200" stroke="#ef7f86" stroke-width=".9"/></svg>
</div>
<div class="row a" style="top:604.9px">
<div class="av a" style="background:#0a6cff;color:#fff;font-size:9px;text-align:center;line-height:20px;letter-spacing:-.3px">H</div>
<div class="nm t">HQY</div>
<svg style="left:208.3px;top:8.5px" width="10" height="12" viewBox="0 0 10 12"><rect x="3.300" y="1.500" width="3.400" height="5.800" rx="1.700" fill="#cdcdcd"/><path d="M1.800 6q0 3.200 3.200 3.200t3.200-3.200M5 9.200v1.600M3.300 11h3.400" stroke="#cdcdcd" stroke-width=".8" fill="none"/><path d="M8.800 1L1.300 10.500" stroke="#ef7f86" stroke-width=".9"/></svg>
<svg style="left:223.3px;top:10.0px" width="11" height="9" viewBox="0 0 11 9"><rect x=".5" y="1.800" width="6.800" height="5.400" rx=".8" fill="#d2d2d2"/><path d="M7.500 4.500l3-2.300v4.600z" fill="#d2d2d2"/><path d="M.3 7.800L10.700 1.200" stroke="#ef7f86" stroke-width=".9"/></svg>
</div>
<div class="a" style="left:60px;top:92px;width:161px;height:24px;background:#303134;border-radius:3px;overflow:hidden"><div class="a" style="left:0;top:0;width:24px;height:24px;background:#2a2b2d;border-right:1px solid #3a3b3e"></div><svg style="left:7px;top:6px" width="10" height="12" viewBox="0 0 10 12"><rect x="3.300" y="1.500" width="3.400" height="5.800" rx="1.700" fill="#8a8a8c"/><path d="M1.800 6q0 3.200 3.200 3.200t3.200-3.200M5 9.200v1.600M3.300 11h3.400" stroke="#8a8a8c" stroke-width=".8" fill="none"/><path d="M8.800 1L1.300 10.500" stroke="#d8434a" stroke-width=".9"/></svg><div class="t" style="left:28px;top:9.300px;font-size:8.200px;color:#fff">正在讲话: 李力;</div><svg style="left:100px;top:4px" width="30" height="16" viewBox="0 0 30 16"><path d="M0 9l8-8 5 5-8 8zM10 9l8-8 10 10-4 4-6-6-4 4z" fill="#48494c"/></svg></div>
<div class="a" style="left:1px;top:628px;width:244px;height:40px;background:#fff;border-top:1px solid #ececec"></div>
<div class="a" style="left:29.5px;top:638px;width:59px;height:18px;border:1px solid #e6e6e6;border-radius:1px;color:#1668dc;font-size:8.200px;text-align:center;line-height:17.500px;white-space:nowrap">全体静音</div>
<div class="a" style="left:98.5px;top:638px;width:58px;height:18px;border:1px solid #e6e6e6;border-radius:1px;color:#1668dc;font-size:8.200px;text-align:center;line-height:17.500px;white-space:nowrap">解除全体静音</div>
<div class="a" style="left:167.5px;top:638px;width:48px;height:18px;border:1px solid #e6e6e6;border-radius:1px;color:#1668dc;font-size:8.200px;text-align:center;line-height:17.500px;white-space:nowrap">更多 <span style="font-size:5px;vertical-align:1px">▼</span></div>
<div class="a" style="left:237px;top:602px;width:8px;height:38px;background:#1f2a36;border-radius:2px 0 0 2px"></div>
<div class="a" style="left:240px;top:606px;width:2px;height:30px;background:#3a78c2"></div>
</div>

<!-- TASKBAR -->
<div id="taskbar" class="a">
<svg style="left:10px;top:8px" width="11" height="11" viewBox="0 0 11 11"><path d="M0 1.500l4.700-.7v4.400h-4.700zM5.300.7l5.700-.8v5.300h-5.700zM0 5.800h4.700v4.400l-4.700-.7zM5.300 5.800h5.700v5.300l-5.700-.8z" fill="#111"/></svg>
<div class="a" style="left:32px;top:1.500px;width:226px;height:25px;background:#fff"></div>
<svg style="left:40px;top:7px" width="11" height="11" viewBox="0 0 11 11"><circle cx="6.800" cy="4.200" r="3.400" fill="none" stroke="#222" stroke-width="1"/><path d="M4.400 6.600L.6 10.400" stroke="#222" stroke-width="1.100"/></svg>
<div class="t" style="left:58px;top:8.500px;font-size:9.200px;color:#333">在这里输入你要搜索的内容</div>
<div class="a" style="left:269px;top:7px;width:11px;height:11px;border:2px solid #111;border-radius:50%"></div>
<svg style="left:300px;top:7px" width="13" height="11" viewBox="0 0 13 11"><path d="M1.500 2.500h6.500v6h-6.500zM1.500.3v2M8 .3v2M1.500 8.500v2M8 8.500v2M10.500 2.500v1.500M10.500 6v2.500" fill="none" stroke="#111" stroke-width="1.200"/></svg>
<svg style="left:332px;top:6px" width="14" height="14" viewBox="0 0 14 14"><g fill="#111"><path d="M7 7q-5-1-4-5 2-2.500 4-1.500 2 3 0 6.500z"/><path d="M7 7q1-5 5-4 2.500 2 1.500 4-3 2-6.500 0z"/><path d="M7 7q5 1 4 5-2 2.500-4 1.500-2-3 0-6.500z"/><path d="M7 7q-1 5-5 4-2.500-2-1.500-4 3-2 6.500 0z"/></g></svg>
<div class="a" style="left:361.500px;top:7px;width:1px;height:12px;background:#444"></div><div class="a" style="left:364px;top:7px;width:1px;height:12px;background:#444"></div>
<svg style="left:382px;top:6px" width="15" height="13" viewBox="0 0 15 13"><path d="M3 12q-1-5 0-8l1-3.500 2 2.500h3l2-2.500 1 3.500q1 4 0 8z" fill="#2a3f86"/><path d="M0 12h3" stroke="#2a3f86" stroke-width="1"/></svg>
<svg style="left:413px;top:5px" width="17" height="15" viewBox="0 0 17 15"><path d="M0 6l8.500-6 8.500 6v9h-17z" fill="#1a86d9"/><path d="M1.500 6.500h14l-7 5z" fill="#fff"/><path d="M0 15l8.500-6 8.500 6z" fill="#3aa0ea"/></svg>
<svg style="left:446px;top:5px" width="17" height="16" viewBox="0 0 17 16"><path d="M4 1l10 1.500v8l-10-1.500z" fill="#6cb6ea"/><path d="M5 10.500l7 1v2l-7-1z" fill="#b8c4cf"/><path d="M1 11l6 2-2 2-6-2z" fill="#d5dbe1"/></svg>
<div class="a" style="left:478px;top:5px;width:15px;height:14px;background:#0b2a3d;border:1px solid #31a8ff;color:#31c5f0;font-size:8.500px;font-weight:bold;line-height:12px;text-align:center">Ps</div>
<svg style="left:509px;top:4px" width="17" height="17" viewBox="0 0 17 17"><circle cx="8.500" cy="9" r="7.500" fill="#ff8a16"/><path d="M1 9q0-6 6-8-3 3-1 5 2-2 5-1 4 2 3 7-3 5-8 4-5-1-5-7z" fill="#ff4f2e"/><circle cx="9.500" cy="9.500" r="3.200" fill="#7b42d8"/><path d="M9 1q5 0 7 6-2-3-4-3-1-2-3-3z" fill="#ffcb2b"/></svg>
<svg style="left:542px;top:4px" width="17" height="17" viewBox="0 0 17 17"><circle cx="8.500" cy="8.500" r="8" fill="#e9423a"/><path d="M8.500 8.500L1.600 4.500A8 8 0 0 0 7 16.400z" fill="#34a353"/><path d="M8.500 8.500L7 16.400A8 8 0 0 0 16.300 6.500z" fill="#f9bc15"/><path d="M1.600 4.500A8 8 0 0 1 16.300 6.500H8.500z" fill="#e9423a"/><circle cx="8.500" cy="8.500" r="3.700" fill="#fff"/><circle cx="8.500" cy="8.500" r="2.900" fill="#4586f3"/></svg>
<svg style="left:575px;top:4px" width="16" height="17" viewBox="0 0 16 17"><ellipse cx="8" cy="8.500" rx="7.500" ry="8" fill="#e3162c"/><ellipse cx="8" cy="8.500" rx="3.300" ry="5.600" fill="#e3e3e3"/></svg>
<svg style="left:608px;top:4px" width="17" height="17" viewBox="0 0 17 17"><path d="M1 1l9 1v7l-9-1z" fill="#2d5fc4"/><path d="M5 5l8 1v6l-8-1z" fill="#6ea2ea"/><path d="M3 10l5 1v2l-5-1z" fill="#9aa7b5"/><circle cx="12.500" cy="12.500" r="3.500" fill="#dfe7df" stroke="#6f8f6f" stroke-width=".8"/><path d="M11 12.500h3M12.500 11l1.500 1.500-1.500 1.500" stroke="#3c7a3c" stroke-width=".9" fill="none"/></svg>
<svg style="left:640px;top:4px" width="17" height="17" viewBox="0 0 17 17"><rect width="17" height="17" rx="3" fill="#2f7dea"/><path d="M3 5l5 3 5-4-2 6-4 3v-3l-2 1 1-3z" fill="#fff"/></svg>
<svg style="left:672px;top:5px" width="17" height="15" viewBox="0 0 17 15"><path d="M0 1h6l1.500 2h9.500v11h-17z" fill="#f6c445"/><path d="M0 5h17v9h-17z" fill="#fbd867"/><path d="M4 9h9v5h-9z" fill="#3d92e0"/><path d="M6 11.500h5v2.500h-5z" fill="#fbd867"/></svg>
<svg style="left:704px;top:4px" width="18" height="17" viewBox="0 0 18 17"><rect x="5" y="1" width="13" height="15" rx="1" fill="#21a366"/><rect x="11.500" y="1" width="6.500" height="7.500" fill="#33c481"/><rect x="5" y="8.500" width="6.500" height="7.500" fill="#107c41"/><rect x="11.500" y="8.500" width="6.500" height="7.500" fill="#185c37"/><rect x="0" y="4" width="10" height="10" rx="1" fill="#107c41"/><text x="5" y="12" font-size="8" font-weight="bold" fill="#fff" text-anchor="middle" font-family="'Liberation Sans',sans-serif">X</text></svg>
<div class="a" style="left:729px;top:0;width:32px;height:26px;background:#f7a96b"></div>
<svg style="left:736px;top:5px" width="19" height="16" viewBox="0 0 19 16"><ellipse cx="7" cy="6" rx="6.500" ry="5.500" fill="#3fc24a"/><ellipse cx="13" cy="10.500" rx="5.500" ry="4.700" fill="#eeeeee"/><circle cx="5" cy="5" r=".8" fill="#1f7f2a"/><circle cx="9" cy="5" r=".8" fill="#1f7f2a"/><circle cx="11.500" cy="10" r=".6" fill="#888"/><circle cx="14.500" cy="10" r=".6" fill="#888"/></svg>
<svg style="left:769px;top:3px" width="17" height="19" viewBox="0 0 17 19"><path d="M2 0h10l4 4v15h-14z" fill="#f4f4f4" stroke="#9a9a9a" stroke-width=".7"/><rect x="4" y="5" width="9" height="6" fill="#5aa0d8"/><path d="M4 11l3-3 2 2 2-1.500 2 2.500z" fill="#4a8f4a"/><rect x="0" y="11.500" width="13" height="5.500" fill="#2f6fb8"/></svg>
<div class="a" style="left:793px;top:0;width:32px;height:26px;background:#efeded"></div>
<svg style="left:800px;top:4px" width="18" height="17" viewBox="0 0 18 17"><rect width="18" height="17" rx="3.500" fill="#1a6cf0"/><path d="M3 11l3.500-5 2.500 3 2.500-3 3.500 5h-2.800l-.9-1.300-1 1.300h-2.600l-1-1.300-.9 1.300z" fill="#fff"/></svg>
<svg style="left:833px;top:4px" width="18" height="17" viewBox="0 0 18 17"><rect width="18" height="17" fill="#1f7fd6"/><path d="M0 17l7-9 4 4 3-2.500 4 4.500v3z" fill="#0e4f96"/><path d="M0 17l7-9 6 9z" fill="#135da8"/><circle cx="13" cy="4.500" r="1.800" fill="#cfe8fb"/></svg>
<div class="a" style="left:506px;top:24.500px;width:24px;height:1.500px;background:#1a78d6"></div>
<div class="a" style="left:538px;top:24.500px;width:24px;height:1.500px;background:#1a78d6"></div>
<div class="a" style="left:666px;top:24.500px;width:29px;height:1.500px;background:#1a78d6"></div>
<div class="a" style="left:698px;top:24.500px;width:29px;height:1.500px;background:#1a78d6"></div>
<div class="a" style="left:730px;top:24.500px;width:31px;height:1.500px;background:#e8741e"></div>
<div class="a" style="left:762px;top:24.500px;width:29px;height:1.500px;background:#1a78d6"></div>
<div class="a" style="left:794px;top:24.500px;width:31px;height:1.500px;background:#1a78d6"></div>
<div class="a" style="left:827px;top:24.500px;width:29px;height:1.500px;background:#1a78d6"></div>
<svg style="left:998px;top:10px" width="9" height="6" viewBox="0 0 9 6"><path d="M.5 5.500l4-4.500 4 4.500" fill="none" stroke="#222" stroke-width="1.100"/></svg>
<svg style="left:1012px;top:6px" width="12" height="12" viewBox="0 0 12 12"><rect x=".5" y="1" width="9" height="9" fill="#f2f2f2" stroke="#333" stroke-width=".9"/><circle cx="5" cy="5" r="2" fill="none" stroke="#333" stroke-width=".8"/><rect x="7" y="7.500" width="4" height="4" rx="1" fill="#4a8fe0"/></svg>
<svg style="left:1029px;top:5px" width="9" height="14" viewBox="0 0 9 14"><rect x="2" y="0" width="5" height="9" rx="2.500" fill="#111"/><path d="M.5 7q0 4 4 4t4-4M4.500 11v2M2.500 13.500h4" stroke="#111" stroke-width="1" fill="none"/></svg>
<svg style="left:1043px;top:6px" width="14" height="12" viewBox="0 0 14 12"><ellipse cx="5" cy="4.500" rx="4.800" ry="4.200" fill="#3fc24a"/><ellipse cx="9.500" cy="8" rx="4" ry="3.400" fill="#f2f2f2"/></svg>
<svg style="left:1060px;top:6px" width="13" height="13" viewBox="0 0 13 13"><circle cx="6.500" cy="6.500" r="6" fill="#f4d30a" stroke="#3a9a28" stroke-width="1"/><path d="M6.500 3.500v6M3.500 6.500h6" stroke="#1f8f2a" stroke-width="1.600"/></svg>
<svg style="left:1078px;top:7px" width="12" height="11" viewBox="0 0 12 11"><path d="M1 10.500q0-9 10-9.500M3.500 10.500q0-6.500 7.500-7M6 10.500q0-4 5-4.500" fill="none" stroke="#888" stroke-width="1"/><path d="M8 10.500q0-2 3-2v2z" fill="#666"/></svg>
<svg style="left:1090px;top:6px" width="13" height="12" viewBox="0 0 13 12"><path d="M.5 4h2.500l3-3v10l-3-3h-2.500z" fill="none" stroke="#222" stroke-width="1"/><path d="M8 4q1.200 2 0 4M9.800 2.500q2.200 3.500 0 7" fill="none" stroke="#555" stroke-width=".9"/><path d="M11.500 1q3 5 0 10" fill="none" stroke="#aaa" stroke-width=".8"/></svg>
<svg style="left:1107px;top:7px" width="14" height="10" viewBox="0 0 14 10"><path d="M1 .5v9M1 1.500h2" stroke="#222" stroke-width="1" fill="none"/><rect x="3" y="2" width="10" height="6.500" fill="none" stroke="#222" stroke-width="1"/><rect x="4.500" y="3.500" width="7" height="3.500" fill="#222"/></svg>
<div class="t" style="left:1125px;top:7px;font-size:11px;color:#777">中</div>
<svg style="left:1140px;top:6px" width="13" height="13" viewBox="0 0 13 13"><path d="M1.500 1.500l10-1 .8 10-10 1.500z" fill="#fff" stroke="#e8511f" stroke-width="1.300"/><text x="6.700" y="10" font-size="9.500" font-weight="bold" fill="#e8511f" text-anchor="middle" font-family="'Liberation Sans',sans-serif">S</text></svg>
<div class="t" style="left:1163px;top:2.500px;font-size:8.400px;color:#222">17:07 周三</div>
<div class="t" style="left:1163px;top:14px;font-size:8.400px;color:#222">2022/4/20</div>
<div class="a" style="left:1196px;top:14px;width:10px;height:10px;border-radius:50%;background:#e8141c;color:#fff;font-size:7.500px;font-weight:bold;text-align:center;line-height:10px">1</div>
<svg style="left:1217px;top:4px" width="12" height="12" viewBox="0 0 12 12"><path d="M.5.500h10v9h-10z" fill="none" stroke="#222" stroke-width="1"/><path d="M2 3h7M2 5h7M2 7h4" stroke="#222" stroke-width=".9"/></svg>
<div class="a" style="left:1224px;top:11px;width:11px;height:9px;background:#e8141c;color:#fff;font-size:6.500px;font-weight:bold;text-align:center;line-height:9px">S2</div>
<svg style="left:1241px;top:4px" width="13" height="13" viewBox="0 0 13 13"><path d="M.5.500h11v8.500h-6l-3 3v-3h-2z" fill="#222"/><path d="M2.500 3h7M2.500 5h7M2.500 7h5" stroke="#e4e0e0" stroke-width=".8"/></svg>
<div class="a" style="left:1248px;top:12px;width:11px;height:11px;border-radius:50%;background:#e4e0e0;border:1px solid #333;color:#222;font-size:7.500px;text-align:center;line-height:9px">1</div>
</div>
<div class="a" style="left:709px;top:673px;width:121px;height:14.500px;background:#fff"></div>
<svg style="left:693px;top:670px" width="19" height="18" viewBox="0 0 19 18"><path d="M1 4.500L14.500.5l4 12.500-13 5z" fill="#e8511f"/><text x="9.600" y="14" font-size="14.500" font-weight="bold" font-style="italic" fill="#fff" text-anchor="middle" transform="rotate(-14 9.500 9)" font-family="'Liberation Sans',sans-serif">S</text></svg>
<div class="t" style="left:715.500px;top:675.200px;font-size:10.800px;font-weight:bold;color:#1f6fc0">中</div>
<svg style="left:731px;top:677px" width="8" height="8" viewBox="0 0 8 8"><circle cx="1.500" cy="1.500" r="1" fill="none" stroke="#1f6fc0" stroke-width=".8"/><path d="M5.500 3.500q1.500.3.800 2l-1 1.500" fill="none" stroke="#1f6fc0" stroke-width="1.400" stroke-linecap="round"/></svg>
<svg style="left:744px;top:674.500px" width="11" height="11" viewBox="0 0 11 11"><circle cx="5.500" cy="5.500" r="4.800" fill="none" stroke="#1f6fc0" stroke-width="1"/><circle cx="3.800" cy="4.300" r=".7" fill="#1f6fc0"/><circle cx="7.200" cy="4.300" r=".7" fill="#1f6fc0"/><path d="M3.300 6.800q2.200 1.800 4.400 0" fill="none" stroke="#1f6fc0" stroke-width=".8"/></svg>
<svg style="left:760px;top:674.500px" width="8" height="11" viewBox="0 0 8 11"><rect x="2.200" y="0" width="3.600" height="6.500" rx="1.800" fill="#1f6fc0"/><path d="M.6 5q0 3.300 3.400 3.300t3.400-3.300M4 8.300v1.700M2.300 10.300h3.400" stroke="#1f6fc0" stroke-width=".9" fill="none"/></svg>
<svg style="left:773px;top:676px" width="11" height="8" viewBox="0 0 11 8"><rect x=".3" y=".3" width="10.400" height="7.400" rx="1" fill="#1f6fc0"/><path d="M1.500 2h8M1.500 3.700h8" stroke="#fff" stroke-width=".7" stroke-dasharray="1 .7"/><path d="M3 5.800h5" stroke="#fff" stroke-width=".8"/></svg>
<svg style="left:789px;top:675px" width="12" height="11" viewBox="0 0 12 11"><circle cx="4.500" cy="2.300" r="2" fill="#b9bdc4"/><path d="M.5 9q0-4.500 4-4.500t4 4.500z" fill="#b9bdc4"/><rect x="5" y="6" width="6.500" height="4.500" rx=".6" fill="#d5d8dd" stroke="#b9bdc4" stroke-width=".6"/></svg>
<svg style="left:803px;top:675px" width="10" height="10" viewBox="0 0 10 10"><path d="M3 .3q2 1.400 4 0l3 2.200-1.500 2-.9-.6v6h-5.200v-6l-.9.600-1.500-2z" fill="#1f6fc0"/></svg>
<svg style="left:817.500px;top:675.500px" width="9" height="9" viewBox="0 0 9 9"><rect x="0" y="0" width="4" height="4" fill="#1f6fc0"/><rect x="5" y="0" width="4" height="4" fill="#5f9bdb"/><rect x="0" y="5" width="4" height="4" fill="#1f6fc0"/><rect x="5" y="5" width="4" height="4" fill="#1f6fc0"/></svg>
<svg style="left:1px;top:675px" width="10" height="10" viewBox="0 0 10 10"><rect x=".5" y="1" width="9" height="6" rx=".8" fill="#fff"/><path d="M3 5.500q.5-2 3-2v-1l2 1.600-2 1.600v-1q-1.800 0-3 .8z" fill="#222"/><rect x="3" y="8" width="4" height="1.200" fill="#fff"/></svg>
<svg style="left:12px;top:674.500px" width="9" height="11" viewBox="0 0 9 11"><rect x="2.800" y=".5" width="3.400" height="6" rx="1.700" fill="#2fd15a"/><path d="M1.200 5q0 3.300 3.300 3.300t3.300-3.300M4.500 8.300v1.500M3 10h3" stroke="#fff" stroke-width=".9" fill="none"/></svg>
</body>
</html>
